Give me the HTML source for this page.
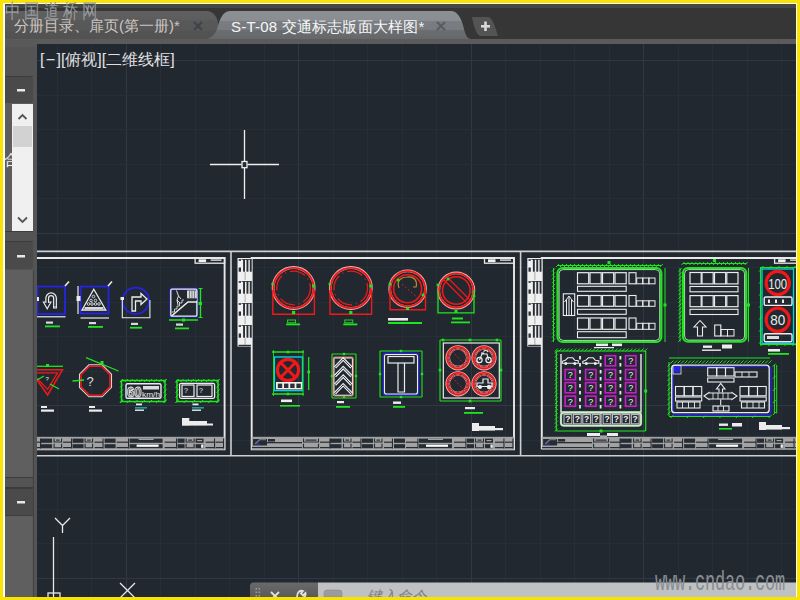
<!DOCTYPE html><html><head><meta charset="utf-8"><style>
*{margin:0;padding:0;box-sizing:border-box}
html,body{width:800px;height:600px;overflow:hidden;background:#f9e300}
body{position:relative;font-family:"Liberation Sans",sans-serif}
.abs{position:absolute}
.t{position:absolute;white-space:nowrap;font-family:"Liberation Sans",sans-serif}
</style></head><body>
<div class="abs" style="left:3px;top:3px;width:794px;height:594px;background:#ffffff"></div>
<svg class="abs" style="left:0;top:0" width="800" height="600" viewBox="0 0 800 600"><defs><clipPath id="cd"><rect x="37" y="44" width="759" height="553"/></clipPath><linearGradient id="gact" x1="0" y1="0" x2="0" y2="1"><stop offset="0" stop-color="#8c8f93"/><stop offset="0.33" stop-color="#8a8d91"/><stop offset="0.33" stop-color="#7a7e82"/><stop offset="0.64" stop-color="#777b7f"/><stop offset="0.64" stop-color="#6b6e72"/><stop offset="1" stop-color="#64676a"/></linearGradient><linearGradient id="gina" x1="0" y1="0" x2="0" y2="1"><stop offset="0" stop-color="#606060"/><stop offset="0.3" stop-color="#5d5d5d"/><stop offset="0.3" stop-color="#595959"/><stop offset="0.7" stop-color="#575757"/><stop offset="0.7" stop-color="#535353"/><stop offset="1" stop-color="#525252"/></linearGradient></defs><rect x="5" y="4" width="791" height="40" fill="#363636"/><rect x="5" y="4" width="791" height="4" fill="#474747"/><path d="M5,11 L206,11 C214,11 218,18 218,25 C218,33 214,39.5 206,39.5 L5,39.5 Z" fill="url(#gina)"/><path d="M230,11 L451,11 C457,11 460,17 462,22 C464,28 465,35 468,38 L473,40 L203,40 C210,39 215,35 217,29 C219,22 222,11 230,11 Z" fill="url(#gact)"/><path d="M472,17 L488,17 C493,17 496,30 498,36 L481,36 C476,36 473,23 472,17 Z" fill="#545454"/><rect x="481" y="25" width="9" height="2.6" fill="#d8d8d8"/><rect x="484.2" y="21.5" width="2.6" height="9.5" fill="#d8d8d8"/><rect x="5" y="39" width="791" height="5" fill="#5b5b5b"/><path d="M194,22 L202,30 M202,22 L194,30" stroke="#3e444b" stroke-width="2.2"/><path d="M437,22 L445,30 M445,22 L437,30" stroke="#5a5d60" stroke-width="2.2"/><rect x="5" y="44" width="32" height="553" fill="#545454"/><rect x="5" y="40" width="32" height="7" fill="#595959"/><path d="M5,47 L30,47 Q33,47 33,50 L33,76 L5,76 Z" fill="#545454"/><rect x="5" y="76" width="28" height="1" fill="#3c3c3c"/><path d="M5,77 L30,77 Q33,77 33,80 L33,100 Q33,103 30,103 L5,103 Z" fill="#4a4a4a"/><rect x="17" y="89" width="8" height="2.5" fill="#e8e8e8"/><rect x="5" y="103" width="28" height="128" fill="#5d5d5d"/><rect x="12" y="104" width="21" height="127" fill="#f0f0f0"/><rect x="13" y="126" width="19" height="21" fill="#d2d2d2"/><path d="M18.5,119 L22.5,115 L26.5,119" stroke="#555" stroke-width="1.8" fill="none"/><path d="M18,217.5 L22.5,222 L27,217.5" stroke="#555" stroke-width="1.8" fill="none"/><rect x="5" y="231" width="28" height="1" fill="#3c3c3c"/><path d="M5,232 L30,232 Q33,232 33,235 L33,238 Q33,241 30,241 L5,241 Z" fill="#545454"/><rect x="5" y="241" width="28" height="1" fill="#3c3c3c"/><path d="M5,242 L30,242 Q33,242 33,245 L33,266 Q33,269 30,269 L5,269 Z" fill="#4a4a4a"/><rect x="17" y="255" width="8" height="2.5" fill="#e8e8e8"/><rect x="5" y="270" width="28" height="207" fill="#5f5f5f"/><rect x="5" y="477" width="28" height="1" fill="#3c3c3c"/><path d="M5,478 L30,478 Q33,478 33,481 L33,484 Q33,487 30,487 L5,487 Z" fill="#545454"/><rect x="5" y="487" width="28" height="2" fill="#3c3c3c"/><path d="M5,489 L30,489 Q33,489 33,492 L33,512 Q33,515 30,515 L5,515 Z" fill="#4a4a4a"/><rect x="17" y="501" width="8" height="2.5" fill="#e8e8e8"/><rect x="5" y="515" width="28" height="1" fill="#3c3c3c"/><rect x="5" y="516" width="28" height="81" fill="#5f5f5f"/><rect x="32.9" y="270" width="0.9" height="327" fill="#3e3e3e"/><g clip-path="url(#cd)"><rect x="37" y="44" width="759" height="553" fill="#212830"/><rect x="57" y="44" width="1" height="553" fill="#272e37"/><rect x="91" y="44" width="1" height="553" fill="#272e37"/><rect x="126" y="44" width="1" height="553" fill="#313844"/><rect x="160" y="44" width="1" height="553" fill="#272e37"/><rect x="195" y="44" width="1" height="553" fill="#272e37"/><rect x="229" y="44" width="1" height="553" fill="#272e37"/><rect x="264" y="44" width="1" height="553" fill="#272e37"/><rect x="298" y="44" width="1" height="553" fill="#313844"/><rect x="333" y="44" width="1" height="553" fill="#272e37"/><rect x="367" y="44" width="1" height="553" fill="#272e37"/><rect x="402" y="44" width="1" height="553" fill="#272e37"/><rect x="436" y="44" width="1" height="553" fill="#272e37"/><rect x="471" y="44" width="1" height="553" fill="#313844"/><rect x="505" y="44" width="1" height="553" fill="#272e37"/><rect x="540" y="44" width="1" height="553" fill="#272e37"/><rect x="574" y="44" width="1" height="553" fill="#272e37"/><rect x="609" y="44" width="1" height="553" fill="#272e37"/><rect x="643" y="44" width="1" height="553" fill="#313844"/><rect x="678" y="44" width="1" height="553" fill="#272e37"/><rect x="712" y="44" width="1" height="553" fill="#272e37"/><rect x="747" y="44" width="1" height="553" fill="#272e37"/><rect x="781" y="44" width="1" height="553" fill="#272e37"/><rect x="37" y="60" width="759" height="1" fill="#313844"/><rect x="37" y="95" width="759" height="1" fill="#272e37"/><rect x="37" y="129" width="759" height="1" fill="#272e37"/><rect x="37" y="164" width="759" height="1" fill="#272e37"/><rect x="37" y="198" width="759" height="1" fill="#272e37"/><rect x="37" y="233" width="759" height="1" fill="#313844"/><rect x="37" y="267" width="759" height="1" fill="#272e37"/><rect x="37" y="302" width="759" height="1" fill="#272e37"/><rect x="37" y="336" width="759" height="1" fill="#272e37"/><rect x="37" y="371" width="759" height="1" fill="#272e37"/><rect x="37" y="405" width="759" height="1" fill="#313844"/><rect x="37" y="440" width="759" height="1" fill="#272e37"/><rect x="37" y="474" width="759" height="1" fill="#272e37"/><rect x="37" y="509" width="759" height="1" fill="#272e37"/><rect x="37" y="543" width="759" height="1" fill="#272e37"/><rect x="37" y="578" width="759" height="1" fill="#313844"/><g fill="none" stroke="#cfcfcf" stroke-width="1.6"><path d="M30,251.4 H800 M30,455.7 H800 M231,251.4 V455.7 M520.6,251.4 V455.7"/></g><g fill="none" stroke="#e8e8e8" stroke-width="1.9"><path d="M20,258 H224.6 V449.2 H20"/><path d="M251.7,258 H514 V449.2 H251.7 Z"/><path d="M541.8,449.2 V258 H810"/></g><rect x="237.5" y="258" width="14.3" height="88.5" fill="#f0f0f0"/><rect x="243.1" y="259.2" width="1.9" height="12.5" fill="#2a2f36"/><rect x="246.5" y="259.2" width="1.9" height="12.5" fill="#2a2f36"/><rect x="249.8" y="259.2" width="1.9" height="12.5" fill="#2a2f36"/><rect x="238.7" y="259.2" width="2.3" height="1.6" fill="#2a2f36"/><rect x="238.7" y="267.5" width="2.3" height="4.2" fill="#2a2f36"/><rect x="241.5" y="259" width="10" height="0.8" fill="#2a2f36"/><rect x="244.7" y="272" width="0.8" height="8" fill="#999"/><rect x="243.1" y="281.2" width="1.9" height="12.5" fill="#2a2f36"/><rect x="246.5" y="281.2" width="1.9" height="12.5" fill="#2a2f36"/><rect x="249.8" y="281.2" width="1.9" height="12.5" fill="#2a2f36"/><rect x="238.7" y="281.2" width="2.3" height="1.6" fill="#2a2f36"/><rect x="238.7" y="289.5" width="2.3" height="4.2" fill="#2a2f36"/><rect x="241.5" y="281" width="10" height="0.8" fill="#2a2f36"/><rect x="244.7" y="294" width="0.8" height="8" fill="#999"/><rect x="243.1" y="303.2" width="1.9" height="12.5" fill="#2a2f36"/><rect x="246.5" y="303.2" width="1.9" height="12.5" fill="#2a2f36"/><rect x="249.8" y="303.2" width="1.9" height="12.5" fill="#2a2f36"/><rect x="238.7" y="303.2" width="2.3" height="1.6" fill="#2a2f36"/><rect x="238.7" y="311.5" width="2.3" height="4.2" fill="#2a2f36"/><rect x="241.5" y="303" width="10" height="0.8" fill="#2a2f36"/><rect x="244.7" y="316" width="0.8" height="8" fill="#999"/><rect x="243.1" y="325.2" width="1.9" height="12.5" fill="#2a2f36"/><rect x="246.5" y="325.2" width="1.9" height="12.5" fill="#2a2f36"/><rect x="249.8" y="325.2" width="1.9" height="12.5" fill="#2a2f36"/><rect x="238.7" y="325.2" width="2.3" height="1.6" fill="#2a2f36"/><rect x="238.7" y="333.5" width="2.3" height="4.2" fill="#2a2f36"/><rect x="241.5" y="325" width="10" height="0.8" fill="#2a2f36"/><rect x="244.7" y="338" width="0.8" height="8" fill="#999"/><rect x="238.5" y="344.8" width="12.5" height="1.2" fill="#2a2f36"/><rect x="527.3" y="258" width="14.3" height="88.5" fill="#f0f0f0"/><rect x="532.9" y="259.2" width="1.9" height="12.5" fill="#2a2f36"/><rect x="536.3" y="259.2" width="1.9" height="12.5" fill="#2a2f36"/><rect x="539.5999999999999" y="259.2" width="1.9" height="12.5" fill="#2a2f36"/><rect x="528.5" y="259.2" width="2.3" height="1.6" fill="#2a2f36"/><rect x="528.5" y="267.5" width="2.3" height="4.2" fill="#2a2f36"/><rect x="531.3" y="259" width="10" height="0.8" fill="#2a2f36"/><rect x="534.5" y="272" width="0.8" height="8" fill="#999"/><rect x="532.9" y="281.2" width="1.9" height="12.5" fill="#2a2f36"/><rect x="536.3" y="281.2" width="1.9" height="12.5" fill="#2a2f36"/><rect x="539.5999999999999" y="281.2" width="1.9" height="12.5" fill="#2a2f36"/><rect x="528.5" y="281.2" width="2.3" height="1.6" fill="#2a2f36"/><rect x="528.5" y="289.5" width="2.3" height="4.2" fill="#2a2f36"/><rect x="531.3" y="281" width="10" height="0.8" fill="#2a2f36"/><rect x="534.5" y="294" width="0.8" height="8" fill="#999"/><rect x="532.9" y="303.2" width="1.9" height="12.5" fill="#2a2f36"/><rect x="536.3" y="303.2" width="1.9" height="12.5" fill="#2a2f36"/><rect x="539.5999999999999" y="303.2" width="1.9" height="12.5" fill="#2a2f36"/><rect x="528.5" y="303.2" width="2.3" height="1.6" fill="#2a2f36"/><rect x="528.5" y="311.5" width="2.3" height="4.2" fill="#2a2f36"/><rect x="531.3" y="303" width="10" height="0.8" fill="#2a2f36"/><rect x="534.5" y="316" width="0.8" height="8" fill="#999"/><rect x="532.9" y="325.2" width="1.9" height="12.5" fill="#2a2f36"/><rect x="536.3" y="325.2" width="1.9" height="12.5" fill="#2a2f36"/><rect x="539.5999999999999" y="325.2" width="1.9" height="12.5" fill="#2a2f36"/><rect x="528.5" y="325.2" width="2.3" height="1.6" fill="#2a2f36"/><rect x="528.5" y="333.5" width="2.3" height="4.2" fill="#2a2f36"/><rect x="531.3" y="325" width="10" height="0.8" fill="#2a2f36"/><rect x="534.5" y="338" width="0.8" height="8" fill="#999"/><rect x="528.3" y="344.8" width="12.5" height="1.2" fill="#2a2f36"/><rect x="195.1" y="258" width="29.5" height="5.2" fill="none" stroke="#e8e8e8" stroke-width="1.3"/><rect x="198.6" y="259.3" width="7.5" height="2.8" fill="#f2f2f2"/><rect x="210.6" y="259.4" width="11" height="1.4" fill="#e0e0e0"/><rect x="484.5" y="258" width="29.5" height="5.2" fill="none" stroke="#e8e8e8" stroke-width="1.3"/><rect x="488" y="259.3" width="7.5" height="2.8" fill="#f2f2f2"/><rect x="500" y="259.4" width="11" height="1.4" fill="#e0e0e0"/><rect x="774.6" y="258" width="29.5" height="5.2" fill="none" stroke="#e8e8e8" stroke-width="1.3"/><rect x="778.1" y="259.3" width="7.5" height="2.8" fill="#f2f2f2"/><rect x="790.1" y="259.4" width="11" height="1.4" fill="#e0e0e0"/><rect x="-37.69999999999999" y="436.8" width="262.3" height="13" fill="#a2a2a2"/><rect x="-36.39999999999998" y="439" width="14.0" height="6.5" fill="#262c34"/><path d="M-34.39999999999998,444 L-29.399999999999977,439.5 H-23.399999999999977" stroke="#707478" stroke-width="1.5" fill="none"/><rect x="-32.89999999999998" y="443.5" width="3" height="1.6" fill="#3030d0"/><rect x="-22.399999999999977" y="442" width="35.0" height="1.3" fill="#262c34"/><rect x="-37.39999999999998" y="447" width="50.0" height="1.1" fill="#262c34"/><rect x="-21.399999999999977" y="439" width="7.0" height="2.6" fill="#262c34"/><path d="M14.100000000000023,438.5 V442 H29.100000000000023 V438.5 M14.100000000000023,443.8 V447.8 H29.100000000000023 V443.8" stroke="#262c34" stroke-width="1.1" fill="none"/><rect x="16.100000000000023" y="439.5" width="11.0" height="1.2" fill="#262c34"/><rect x="30.600000000000023" y="441.6" width="10.0" height="1.2" fill="#262c34"/><rect x="30.600000000000023" y="447" width="10.0" height="1.2" fill="#262c34"/><rect x="40.00000000000002" y="438.5" width="1.1" height="10" fill="#262c34"/><rect x="40.60000000000002" y="438.6" width="11.5" height="4.2" fill="#262c34"/><rect x="40.60000000000002" y="444.2" width="11.5" height="4" fill="#262c34"/><path d="M54.10000000000002,438.5 V442 H61.60000000000002 V438.5 M54.10000000000002,443.8 V447.8 H61.60000000000002 V443.8" stroke="#262c34" stroke-width="1.1" fill="none"/><rect x="56.10000000000002" y="439.5" width="3.5" height="1.2" fill="#262c34"/><rect x="63.10000000000002" y="441.6" width="8.5" height="1.2" fill="#262c34"/><rect x="63.10000000000002" y="447" width="8.5" height="1.2" fill="#262c34"/><rect x="71.00000000000003" y="438.5" width="1.1" height="10" fill="#262c34"/><rect x="72.60000000000002" y="438.6" width="11.0" height="4.2" fill="#262c34"/><rect x="72.60000000000002" y="444.2" width="11.0" height="4" fill="#262c34"/><path d="M85.10000000000002,438.5 V442 H92.60000000000002 V438.5 M85.10000000000002,443.8 V447.8 H92.60000000000002 V443.8" stroke="#262c34" stroke-width="1.1" fill="none"/><rect x="87.10000000000002" y="439.5" width="3.5" height="1.2" fill="#262c34"/><rect x="94.60000000000002" y="441.6" width="8.5" height="1.2" fill="#262c34"/><rect x="94.60000000000002" y="447" width="8.5" height="1.2" fill="#262c34"/><rect x="102.50000000000003" y="438.5" width="1.1" height="10" fill="#262c34"/><rect x="104.60000000000002" y="438.6" width="11.0" height="4.2" fill="#262c34"/><rect x="104.60000000000002" y="444.2" width="11.0" height="4" fill="#262c34"/><rect x="116.60000000000002" y="441.6" width="12.0" height="1.2" fill="#262c34"/><rect x="116.60000000000002" y="447" width="12.0" height="1.2" fill="#262c34"/><rect x="128.00000000000003" y="438.5" width="1.1" height="10" fill="#262c34"/><rect x="129.60000000000002" y="438.6" width="33.0" height="4.2" fill="#262c34"/><rect x="129.60000000000002" y="444.2" width="33.0" height="4" fill="#262c34"/><rect x="138.60000000000002" y="438.6" width="15.0" height="1.4" fill="#a2a2a2"/><rect x="136.60000000000002" y="444.6" width="22.0" height="2.2" fill="#ffffff"/><rect x="164.60000000000002" y="441.6" width="12.0" height="1.2" fill="#262c34"/><rect x="164.60000000000002" y="447" width="12.0" height="1.2" fill="#262c34"/><rect x="176.00000000000003" y="438.5" width="1.1" height="10" fill="#262c34"/><rect x="177.60000000000002" y="438.6" width="7.0" height="4.2" fill="#262c34"/><rect x="177.60000000000002" y="444.2" width="7.0" height="4" fill="#262c34"/><path d="M186.10000000000002,438.5 V442 H194.10000000000002 V438.5 M186.10000000000002,443.8 V447.8 H194.10000000000002 V443.8" stroke="#262c34" stroke-width="1.1" fill="none"/><rect x="188.10000000000002" y="439.5" width="4.0" height="1.2" fill="#262c34"/><rect x="195.60000000000002" y="438.6" width="8.0" height="4.2" fill="#262c34"/><rect x="195.60000000000002" y="444.2" width="8.0" height="4" fill="#262c34"/><rect x="197.10000000000002" y="440" width="5.0" height="1.2" fill="#a2a2a2"/><rect x="201.10000000000002" y="444.5" width="2.3" height="3.3" fill="#f0f0f0"/><rect x="205.60000000000002" y="441.6" width="9.0" height="1.2" fill="#262c34"/><rect x="205.60000000000002" y="447" width="9.0" height="1.2" fill="#262c34"/><rect x="214.00000000000003" y="438.5" width="1.1" height="10" fill="#262c34"/><rect x="215.60000000000002" y="441.6" width="8.0" height="1.2" fill="#262c34"/><rect x="215.60000000000002" y="447" width="8.0" height="1.2" fill="#262c34"/><rect x="223.00000000000003" y="438.5" width="1.1" height="10" fill="#262c34"/><rect x="251.7" y="436.8" width="262.3" height="13" fill="#a2a2a2"/><rect x="253" y="439" width="14" height="6.5" fill="#262c34"/><path d="M255,444 L260,439.5 H266" stroke="#707478" stroke-width="1.5" fill="none"/><rect x="256.5" y="443.5" width="3" height="1.6" fill="#3030d0"/><rect x="267" y="442" width="35" height="1.3" fill="#262c34"/><rect x="252" y="447" width="50" height="1.1" fill="#262c34"/><rect x="268" y="439" width="7.0" height="2.6" fill="#262c34"/><path d="M303.5,438.5 V442 H318.5 V438.5 M303.5,443.8 V447.8 H318.5 V443.8" stroke="#262c34" stroke-width="1.1" fill="none"/><rect x="305.5" y="439.5" width="11" height="1.2" fill="#262c34"/><rect x="320" y="441.6" width="10" height="1.2" fill="#262c34"/><rect x="320" y="447" width="10" height="1.2" fill="#262c34"/><rect x="329.4" y="438.5" width="1.1" height="10" fill="#262c34"/><rect x="330" y="438.6" width="11.5" height="4.2" fill="#262c34"/><rect x="330" y="444.2" width="11.5" height="4" fill="#262c34"/><path d="M343.5,438.5 V442 H351.0 V438.5 M343.5,443.8 V447.8 H351.0 V443.8" stroke="#262c34" stroke-width="1.1" fill="none"/><rect x="345.5" y="439.5" width="3.5" height="1.2" fill="#262c34"/><rect x="352.5" y="441.6" width="8.5" height="1.2" fill="#262c34"/><rect x="352.5" y="447" width="8.5" height="1.2" fill="#262c34"/><rect x="360.4" y="438.5" width="1.1" height="10" fill="#262c34"/><rect x="362" y="438.6" width="11" height="4.2" fill="#262c34"/><rect x="362" y="444.2" width="11" height="4" fill="#262c34"/><path d="M374.5,438.5 V442 H382.0 V438.5 M374.5,443.8 V447.8 H382.0 V443.8" stroke="#262c34" stroke-width="1.1" fill="none"/><rect x="376.5" y="439.5" width="3.5" height="1.2" fill="#262c34"/><rect x="384" y="441.6" width="8.5" height="1.2" fill="#262c34"/><rect x="384" y="447" width="8.5" height="1.2" fill="#262c34"/><rect x="391.9" y="438.5" width="1.1" height="10" fill="#262c34"/><rect x="394" y="438.6" width="11" height="4.2" fill="#262c34"/><rect x="394" y="444.2" width="11" height="4" fill="#262c34"/><rect x="406" y="441.6" width="12" height="1.2" fill="#262c34"/><rect x="406" y="447" width="12" height="1.2" fill="#262c34"/><rect x="417.4" y="438.5" width="1.1" height="10" fill="#262c34"/><rect x="419" y="438.6" width="33" height="4.2" fill="#262c34"/><rect x="419" y="444.2" width="33" height="4" fill="#262c34"/><rect x="428" y="438.6" width="15" height="1.4" fill="#a2a2a2"/><rect x="426" y="444.6" width="22" height="2.2" fill="#ffffff"/><rect x="454" y="441.6" width="12" height="1.2" fill="#262c34"/><rect x="454" y="447" width="12" height="1.2" fill="#262c34"/><rect x="465.4" y="438.5" width="1.1" height="10" fill="#262c34"/><rect x="467" y="438.6" width="7" height="4.2" fill="#262c34"/><rect x="467" y="444.2" width="7" height="4" fill="#262c34"/><path d="M475.5,438.5 V442 H483.5 V438.5 M475.5,443.8 V447.8 H483.5 V443.8" stroke="#262c34" stroke-width="1.1" fill="none"/><rect x="477.5" y="439.5" width="4" height="1.2" fill="#262c34"/><rect x="485" y="438.6" width="8" height="4.2" fill="#262c34"/><rect x="485" y="444.2" width="8" height="4" fill="#262c34"/><rect x="486.5" y="440" width="5" height="1.2" fill="#a2a2a2"/><rect x="490.5" y="444.5" width="2.3" height="3.3" fill="#f0f0f0"/><rect x="495" y="441.6" width="9" height="1.2" fill="#262c34"/><rect x="495" y="447" width="9" height="1.2" fill="#262c34"/><rect x="503.4" y="438.5" width="1.1" height="10" fill="#262c34"/><rect x="505" y="441.6" width="8" height="1.2" fill="#262c34"/><rect x="505" y="447" width="8" height="1.2" fill="#262c34"/><rect x="512.4" y="438.5" width="1.1" height="10" fill="#262c34"/><rect x="541.8" y="436.8" width="262.30000000000007" height="13" fill="#a2a2a2"/><rect x="543.1" y="439" width="14.0" height="6.5" fill="#262c34"/><path d="M545.1,444 L550.1,439.5 H556.1" stroke="#707478" stroke-width="1.5" fill="none"/><rect x="546.6" y="443.5" width="3" height="1.6" fill="#3030d0"/><rect x="557.1" y="442" width="35.0" height="1.3" fill="#262c34"/><rect x="542.1" y="447" width="50.0" height="1.1" fill="#262c34"/><rect x="558.1" y="439" width="7.0" height="2.6" fill="#262c34"/><path d="M593.6,438.5 V442 H608.6 V438.5 M593.6,443.8 V447.8 H608.6 V443.8" stroke="#262c34" stroke-width="1.1" fill="none"/><rect x="595.6" y="439.5" width="11.0" height="1.2" fill="#262c34"/><rect x="610.1" y="441.6" width="10.0" height="1.2" fill="#262c34"/><rect x="610.1" y="447" width="10.0" height="1.2" fill="#262c34"/><rect x="619.5" y="438.5" width="1.1" height="10" fill="#262c34"/><rect x="620.1" y="438.6" width="11.5" height="4.2" fill="#262c34"/><rect x="620.1" y="444.2" width="11.5" height="4" fill="#262c34"/><path d="M633.6,438.5 V442 H641.1 V438.5 M633.6,443.8 V447.8 H641.1 V443.8" stroke="#262c34" stroke-width="1.1" fill="none"/><rect x="635.6" y="439.5" width="3.5" height="1.2" fill="#262c34"/><rect x="642.6" y="441.6" width="8.5" height="1.2" fill="#262c34"/><rect x="642.6" y="447" width="8.5" height="1.2" fill="#262c34"/><rect x="650.5" y="438.5" width="1.1" height="10" fill="#262c34"/><rect x="652.1" y="438.6" width="11.0" height="4.2" fill="#262c34"/><rect x="652.1" y="444.2" width="11.0" height="4" fill="#262c34"/><path d="M664.6,438.5 V442 H672.1 V438.5 M664.6,443.8 V447.8 H672.1 V443.8" stroke="#262c34" stroke-width="1.1" fill="none"/><rect x="666.6" y="439.5" width="3.5" height="1.2" fill="#262c34"/><rect x="674.1" y="441.6" width="8.5" height="1.2" fill="#262c34"/><rect x="674.1" y="447" width="8.5" height="1.2" fill="#262c34"/><rect x="682.0" y="438.5" width="1.1" height="10" fill="#262c34"/><rect x="684.1" y="438.6" width="11.0" height="4.2" fill="#262c34"/><rect x="684.1" y="444.2" width="11.0" height="4" fill="#262c34"/><rect x="696.1" y="441.6" width="12.0" height="1.2" fill="#262c34"/><rect x="696.1" y="447" width="12.0" height="1.2" fill="#262c34"/><rect x="707.5" y="438.5" width="1.1" height="10" fill="#262c34"/><rect x="709.1" y="438.6" width="33.0" height="4.2" fill="#262c34"/><rect x="709.1" y="444.2" width="33.0" height="4" fill="#262c34"/><rect x="718.1" y="438.6" width="15.0" height="1.4" fill="#a2a2a2"/><rect x="716.1" y="444.6" width="22.0" height="2.2" fill="#ffffff"/><rect x="744.1" y="441.6" width="12.0" height="1.2" fill="#262c34"/><rect x="744.1" y="447" width="12.0" height="1.2" fill="#262c34"/><rect x="755.5" y="438.5" width="1.1" height="10" fill="#262c34"/><rect x="757.1" y="438.6" width="7.0" height="4.2" fill="#262c34"/><rect x="757.1" y="444.2" width="7.0" height="4" fill="#262c34"/><path d="M765.6,438.5 V442 H773.6 V438.5 M765.6,443.8 V447.8 H773.6 V443.8" stroke="#262c34" stroke-width="1.1" fill="none"/><rect x="767.6" y="439.5" width="4.0" height="1.2" fill="#262c34"/><rect x="775.1" y="438.6" width="8.0" height="4.2" fill="#262c34"/><rect x="775.1" y="444.2" width="8.0" height="4" fill="#262c34"/><rect x="776.6" y="440" width="5.0" height="1.2" fill="#a2a2a2"/><rect x="780.6" y="444.5" width="2.3" height="3.3" fill="#f0f0f0"/><rect x="785.1" y="441.6" width="9.0" height="1.2" fill="#262c34"/><rect x="785.1" y="447" width="9.0" height="1.2" fill="#262c34"/><rect x="793.5" y="438.5" width="1.1" height="10" fill="#262c34"/><rect x="795.1" y="441.6" width="8.0" height="1.2" fill="#262c34"/><rect x="795.1" y="447" width="8.0" height="1.2" fill="#262c34"/><rect x="802.5" y="438.5" width="1.1" height="10" fill="#262c34"/><rect x="37.5" y="286.5" width="27.5" height="27.5" fill="none" stroke="#2424e6" stroke-width="1.8"/><path d="M47.2,303 V298.2 A3.9,3.9 0 0 1 55,298.2 V308.6" fill="none" stroke="#ececec" stroke-width="3.9"/><path d="M47.2,303 V298.2 A3.9,3.9 0 0 1 55,298.2 V308.6" fill="none" stroke="#212830" stroke-width="1.5"/><path d="M55,308.6 V306" stroke="#ececec" stroke-width="1" /><path d="M45.3,302 H43.4 L47.2,308.8 L51,302 H49.1" fill="none" stroke="#ececec" stroke-width="1.1"/><path d="M46.6,302.5 H47.8 L47.2,305 Z" fill="#212830"/><path d="M37,316.8 L65.5,316.8" stroke="#ececec" stroke-width="1.2" fill="none"/><path d="M65,286 L69,281.5" stroke="#ececec" stroke-width="1.6"/><rect x="36.5" y="297" width="2.5" height="4" fill="#ececec"/><rect x="46" y="321.5" width="7" height="2.2" fill="#ececec" opacity="0.9"/><rect x="45" y="325.5" width="15" height="1.8" fill="#1ee61e"/><rect x="80.5" y="286.5" width="28" height="27" fill="none" stroke="#2424e6" stroke-width="1.8"/><path d="M93.8,289.2 L105.8,310 L82,310 Z" fill="none" stroke="#ececec" stroke-width="1.3"/><rect x="84.5" y="307" width="19" height="2.2" fill="#d8d8d8"/><circle cx="93.5" cy="296.5" r="1.3" fill="none" stroke="#e0e0e0" stroke-width="0.9"/><circle cx="91" cy="300.5" r="1.3" fill="none" stroke="#e0e0e0" stroke-width="0.9"/><circle cx="95.5" cy="300.5" r="1.3" fill="none" stroke="#e0e0e0" stroke-width="0.9"/><circle cx="88.5" cy="304" r="1.3" fill="none" stroke="#e0e0e0" stroke-width="0.9"/><circle cx="92" cy="304" r="1.3" fill="none" stroke="#e0e0e0" stroke-width="0.9"/><circle cx="95.5" cy="304" r="1.3" fill="none" stroke="#e0e0e0" stroke-width="0.9"/><circle cx="99" cy="304" r="1.3" fill="none" stroke="#e0e0e0" stroke-width="0.9"/><path d="M78,286 L78,314" stroke="#ececec" stroke-width="1.2" fill="none"/><path d="M80.5,318 L109,318" stroke="#ececec" stroke-width="1.2" fill="none"/><rect x="76.5" y="296" width="4" height="5" fill="#ececec"/><path d="M108,286 L112,281.5" stroke="#ececec" stroke-width="1.6"/><rect x="89" y="322" width="7" height="2.2" fill="#ececec" opacity="0.9"/><rect x="88" y="326" width="15" height="1.8" fill="#1ee61e"/><circle cx="135.8" cy="300.8" r="13.2" fill="none" stroke="#2424e6" stroke-width="1.7"/><path d="M122.3,297.5 V317.7 H149.9 V300" fill="none" stroke="#ececec" stroke-width="1.1"/><rect x="120.5" y="297" width="3.5" height="3" fill="#ececec"/><path d="M132,311 V297 H141 V293.5 L147,299 L141,304.5 V301 H135.5 V311 Z" fill="none" stroke="#ececec" stroke-width="1.3"/><rect x="131" y="322.8" width="7" height="2.2" fill="#ececec" opacity="0.9"/><rect x="130" y="326.8" width="12" height="1.8" fill="#1ee61e"/><rect x="170" y="288.4" width="27.7" height="28.6" rx="1.5" fill="none" stroke="#2424e6" stroke-width="1.1"/><rect x="170.8" y="289.2" width="26.1" height="27" rx="1.3" fill="none" stroke="#ececec" stroke-width="1.3"/><path d="M171.5,316 L188,302 H197" fill="none" stroke="#ececec" stroke-width="1.6"/><rect x="187" y="290.5" width="9.5" height="8" fill="#d6d6d6"/><path d="M189.5,291 V298 M192,291 V298 M194.5,291 V298" stroke="#555a60" stroke-width="0.7"/><rect x="187" y="298.5" width="10" height="2" fill="#2a3038"/><path d="M171.5,312 H174.5 V309 H177 V306 H179.5 V303 H182 V300 H184" fill="none" stroke="#d8d8d8" stroke-width="0.9"/><path d="M176.5,290.5 L178.5,296 L177,300 L178,305 M178.5,296 L181,299 M177,300 L180,303" fill="none" stroke="#e0e0e0" stroke-width="1"/><path d="M200.5,288.4 V318 M169,320 H198" stroke="#1ee61e" stroke-width="1.4" fill="none"/><path d="M198.5,288.5 H202.5 M198.5,317.5 H202.5" stroke="#1ee61e" stroke-width="1" fill="none"/><rect x="198.5" y="302" width="3.5" height="3" fill="#1ee61e"/><rect x="182" y="318.5" width="3" height="3" fill="#1ee61e"/><rect x="176" y="323.5" width="7" height="2.2" fill="#ececec" opacity="0.9"/><rect x="175" y="327.5" width="14" height="1.8" fill="#1ee61e"/><path d="M30,369.8 L62.4,369.8 L47.6,394.9 Z" fill="none" stroke="#f01818" stroke-width="1.6"/><path d="M32,372.8 L57.5,372.8 L47.6,389.5 Z" fill="none" stroke="#f01818" stroke-width="1.3"/><path d="M37,366.3 L63,366.3" stroke="#1ee61e" stroke-width="1.3" fill="none"/><rect x="46" y="364" width="3" height="3" fill="#1ee61e"/><path d="M37,380 L44,376" stroke="#1ee61e" stroke-width="1.3" fill="none"/><path d="M50,384 L59,389" stroke="#1ee61e" stroke-width="1.3" fill="none"/><text x="45.5" y="381" font-size="6" fill="#ececec" font-family="Liberation Sans">?</text><rect x="41" y="406" width="6" height="2" fill="#ececec"/><rect x="41" y="409.5" width="13" height="2.2" fill="#ececec"/><polygon points="111.5,387.4 102.1,396.8 88.9,396.8 79.5,387.4 79.5,374.2 88.9,364.8 102.1,364.8 111.5,374.2" fill="none" stroke="#d8d8d8" stroke-width="1.1"/><polygon points="110.0,386.8 101.5,395.3 89.5,395.3 81.0,386.8 81.0,374.8 89.5,366.3 101.5,366.3 110.0,374.8" fill="none" stroke="#f01818" stroke-width="1.6"/><text x="86.5" y="386" font-size="13" fill="#dcdcdc" font-family="Liberation Sans">?</text><path d="M86,357.6 L118.5,371" stroke="#1ee61e" stroke-width="1.2" fill="none"/><path d="M72.5,381 L84,380" stroke="#1ee61e" stroke-width="1.4" fill="none"/><rect x="100.5" y="361" width="3" height="3" fill="#1ee61e"/><rect x="89" y="406" width="6" height="2" fill="#ececec"/><rect x="89" y="409.5" width="13" height="2.2" fill="#ececec"/><rect x="121.5" y="380.5" width="43.5" height="21" fill="none" stroke="#1ee61e" stroke-width="1.5"/><path d="M120.0,382.0 L123.0,379.0" stroke="#1ee61e" stroke-width="1"/><path d="M124.8,382.0 L127.8,379.0" stroke="#1ee61e" stroke-width="1"/><path d="M129.7,382.0 L132.7,379.0" stroke="#1ee61e" stroke-width="1"/><path d="M134.5,382.0 L137.5,379.0" stroke="#1ee61e" stroke-width="1"/><path d="M139.3,382.0 L142.3,379.0" stroke="#1ee61e" stroke-width="1"/><path d="M144.2,382.0 L147.2,379.0" stroke="#1ee61e" stroke-width="1"/><path d="M149.0,382.0 L152.0,379.0" stroke="#1ee61e" stroke-width="1"/><path d="M153.8,382.0 L156.8,379.0" stroke="#1ee61e" stroke-width="1"/><path d="M158.7,382.0 L161.7,379.0" stroke="#1ee61e" stroke-width="1"/><path d="M163.5,382.0 L166.5,379.0" stroke="#1ee61e" stroke-width="1"/><path d="M120.0,403.0 L123.0,400.0" stroke="#1ee61e" stroke-width="1"/><path d="M127.2,403.0 L130.2,400.0" stroke="#1ee61e" stroke-width="1"/><path d="M134.5,403.0 L137.5,400.0" stroke="#1ee61e" stroke-width="1"/><path d="M141.8,403.0 L144.8,400.0" stroke="#1ee61e" stroke-width="1"/><path d="M149.0,403.0 L152.0,400.0" stroke="#1ee61e" stroke-width="1"/><path d="M156.2,403.0 L159.2,400.0" stroke="#1ee61e" stroke-width="1"/><path d="M163.5,403.0 L166.5,400.0" stroke="#1ee61e" stroke-width="1"/><path d="M120.0,382.5 L123.0,379.5" stroke="#1ee61e" stroke-width="1"/><path d="M120.0,387.5 L123.0,384.5" stroke="#1ee61e" stroke-width="1"/><path d="M120.0,392.5 L123.0,389.5" stroke="#1ee61e" stroke-width="1"/><path d="M120.0,397.5 L123.0,394.5" stroke="#1ee61e" stroke-width="1"/><path d="M120.0,402.5 L123.0,399.5" stroke="#1ee61e" stroke-width="1"/><path d="M163.5,382.5 L166.5,379.5" stroke="#1ee61e" stroke-width="1"/><path d="M163.5,387.5 L166.5,384.5" stroke="#1ee61e" stroke-width="1"/><path d="M163.5,392.5 L166.5,389.5" stroke="#1ee61e" stroke-width="1"/><path d="M163.5,397.5 L166.5,394.5" stroke="#1ee61e" stroke-width="1"/><path d="M163.5,402.5 L166.5,399.5" stroke="#1ee61e" stroke-width="1"/><rect x="126" y="383.8" width="35" height="14.4" rx="1.5" fill="none" stroke="#ececec" stroke-width="1.4"/><text x="127" y="397" font-size="14" font-weight="bold" fill="none" stroke="#ececec" stroke-width="0.9" font-family="Liberation Sans" textLength="14.5" lengthAdjust="spacingAndGlyphs">60</text><text x="142" y="397" font-size="7" fill="#ececec" font-family="Liberation Sans" textLength="18" lengthAdjust="spacingAndGlyphs">km/h</text><rect x="143" y="386" width="16" height="3.5" fill="#ddd"/><rect x="136" y="403.5" width="6" height="1.8" fill="#ececec"/><rect x="135" y="407" width="12" height="1.6" fill="#18a0a0"/><rect x="135" y="409.5" width="9" height="1.4" fill="#ececec"/><rect x="177" y="380.5" width="41" height="21" fill="none" stroke="#1ee61e" stroke-width="1.5"/><path d="M175.5,382.0 L178.5,379.0" stroke="#1ee61e" stroke-width="1"/><path d="M180.6,382.0 L183.6,379.0" stroke="#1ee61e" stroke-width="1"/><path d="M185.8,382.0 L188.8,379.0" stroke="#1ee61e" stroke-width="1"/><path d="M190.9,382.0 L193.9,379.0" stroke="#1ee61e" stroke-width="1"/><path d="M196.0,382.0 L199.0,379.0" stroke="#1ee61e" stroke-width="1"/><path d="M201.1,382.0 L204.1,379.0" stroke="#1ee61e" stroke-width="1"/><path d="M206.2,382.0 L209.2,379.0" stroke="#1ee61e" stroke-width="1"/><path d="M211.4,382.0 L214.4,379.0" stroke="#1ee61e" stroke-width="1"/><path d="M216.5,382.0 L219.5,379.0" stroke="#1ee61e" stroke-width="1"/><path d="M175.5,403.0 L178.5,400.0" stroke="#1ee61e" stroke-width="1"/><path d="M183.7,403.0 L186.7,400.0" stroke="#1ee61e" stroke-width="1"/><path d="M191.9,403.0 L194.9,400.0" stroke="#1ee61e" stroke-width="1"/><path d="M200.1,403.0 L203.1,400.0" stroke="#1ee61e" stroke-width="1"/><path d="M208.3,403.0 L211.3,400.0" stroke="#1ee61e" stroke-width="1"/><path d="M216.5,403.0 L219.5,400.0" stroke="#1ee61e" stroke-width="1"/><path d="M175.5,382.5 L178.5,379.5" stroke="#1ee61e" stroke-width="1"/><path d="M175.5,387.5 L178.5,384.5" stroke="#1ee61e" stroke-width="1"/><path d="M175.5,392.5 L178.5,389.5" stroke="#1ee61e" stroke-width="1"/><path d="M175.5,397.5 L178.5,394.5" stroke="#1ee61e" stroke-width="1"/><path d="M175.5,402.5 L178.5,399.5" stroke="#1ee61e" stroke-width="1"/><path d="M216.5,382.5 L219.5,379.5" stroke="#1ee61e" stroke-width="1"/><path d="M216.5,387.5 L219.5,384.5" stroke="#1ee61e" stroke-width="1"/><path d="M216.5,392.5 L219.5,389.5" stroke="#1ee61e" stroke-width="1"/><path d="M216.5,397.5 L219.5,394.5" stroke="#1ee61e" stroke-width="1"/><path d="M216.5,402.5 L219.5,399.5" stroke="#1ee61e" stroke-width="1"/><rect x="179.6" y="383.3" width="35" height="15" rx="1.5" fill="none" stroke="#ececec" stroke-width="1.3"/><rect x="182" y="385" width="12" height="11.5" fill="none" stroke="#ececec" stroke-width="1.2"/><rect x="197" y="385" width="15" height="11.5" fill="none" stroke="#ececec" stroke-width="1.2"/><text x="184" y="393" font-size="7" fill="#ececec" font-family="Liberation Sans">?</text><text x="199" y="393" font-size="7" fill="#ececec" font-family="Liberation Sans">?</text><rect x="192.5" y="403.5" width="6" height="1.8" fill="#ececec"/><rect x="192" y="407" width="12" height="1.6" fill="#18a0a0"/><rect x="192" y="409.5" width="9" height="1.4" fill="#ececec"/><rect x="182" y="418" width="7.3" height="7.7" fill="#ececec"/><rect x="189" y="421" width="18" height="4.6" fill="#ececec"/><rect x="207" y="423.5" width="6" height="2" fill="#ececec"/><circle cx="293.6" cy="288" r="20.5" fill="none" stroke="#e8b4b4" stroke-width="2.8"/><circle cx="293.6" cy="288" r="20.1" fill="none" stroke="#f01818" stroke-width="1.9"/><circle cx="293.6" cy="288" r="16.8" fill="none" stroke="#f01818" stroke-width="1.3" stroke-dasharray="16 4 1 4"/><path d="M272.8,290 V314.3 H314.40000000000003 V290" fill="none" stroke="#f01818" stroke-width="1.4"/><rect x="271.40000000000003" y="282.8" width="2.4" height="2.4" fill="#1ee61e"/><rect x="312.1" y="284.5" width="3" height="3" fill="#1ee61e"/><rect x="292.0" y="310.9" width="3.2" height="3.2" fill="#1ee61e"/><rect x="287.6" y="320" width="8" height="2.8" fill="none" stroke="#1ee61e" stroke-width="0.9"/><rect x="286.1" y="323.5" width="14" height="1.8" fill="#1ee61e"/><circle cx="350.8" cy="288" r="20.5" fill="none" stroke="#e8b4b4" stroke-width="2.8"/><circle cx="350.8" cy="288" r="20.1" fill="none" stroke="#f01818" stroke-width="1.9"/><circle cx="350.8" cy="288" r="16.8" fill="none" stroke="#f01818" stroke-width="1.3" stroke-dasharray="16 4 1 4"/><path d="M330.0,290 V314.3 H371.6 V290" fill="none" stroke="#f01818" stroke-width="1.4"/><rect x="328.6" y="282.8" width="2.4" height="2.4" fill="#1ee61e"/><rect x="369.3" y="284.5" width="3" height="3" fill="#1ee61e"/><rect x="349.2" y="310.9" width="3.2" height="3.2" fill="#1ee61e"/><rect x="344.8" y="320" width="8" height="2.8" fill="none" stroke="#1ee61e" stroke-width="0.9"/><rect x="343.3" y="323.5" width="14" height="1.8" fill="#1ee61e"/><circle cx="407.6" cy="288.7" r="17.9" fill="none" stroke="#e8b4b4" stroke-width="2.7"/><circle cx="407.6" cy="288.7" r="17.5" fill="none" stroke="#f01818" stroke-width="1.8"/><circle cx="407.6" cy="288.7" r="14" fill="none" stroke="#f01818" stroke-width="1.6"/><path d="M399,288 C396,280 402,277 407,277 C413,276 418,280 416,287 L413,287" fill="none" stroke="#c08a30" stroke-width="1.2"/><path d="M402,284 L418,298" stroke="#f01818" stroke-width="0.9" stroke-dasharray="2 2"/><path d="M390,290 V309.7 H425.5 V290" fill="none" stroke="#f01818" stroke-width="1.4"/><rect x="388.7" y="282.7" width="2.6" height="2.6" fill="#1ee61e"/><rect x="396.7" y="278.7" width="2.6" height="2.6" fill="#1ee61e"/><rect x="406.0" y="307.0" width="3" height="3" fill="#1ee61e"/><rect x="421.7" y="293.7" width="2.6" height="2.6" fill="#1ee61e"/><rect x="388" y="318" width="20" height="2.6" fill="#ececec"/><rect x="388" y="322" width="34" height="2" fill="#1ee61e"/><circle cx="456.3" cy="290.5" r="17.599999999999998" fill="none" stroke="#e8b4b4" stroke-width="2.7"/><circle cx="456.3" cy="290.5" r="17.2" fill="none" stroke="#f01818" stroke-width="1.8"/><circle cx="456.3" cy="290.5" r="13.8" fill="none" stroke="#f01818" stroke-width="1.6"/><path d="M444,280 L466,302 M447.5,277.5 L469,299" stroke="#f01818" stroke-width="1.3"/><path d="M438,290 V312.8 H474 V290" fill="none" stroke="#1ee61e" stroke-width="1.3"/><rect x="436.7" y="283.7" width="2.6" height="2.6" fill="#1ee61e"/><rect x="472.7" y="294.7" width="2.6" height="2.6" fill="#1ee61e"/><rect x="454.5" y="310.0" width="3" height="3" fill="#1ee61e"/><rect x="446.7" y="277.7" width="2.6" height="2.6" fill="#1ee61e"/><rect x="452" y="317.5" width="11" height="2" fill="#1ee61e"/><rect x="451" y="321.5" width="19" height="1.8" fill="#1ee61e"/><rect x="274.4" y="357" width="28.1" height="33.6" fill="none" stroke="#00d8dc" stroke-width="1.4"/><path d="M272,352 H304 M272,394 H304 M308.7,357 V390" stroke="#1ee61e" stroke-width="1.3" fill="none"/><path d="M273.5,350 V396 M303,350 V396" stroke="#1ee61e" stroke-width="0.9" fill="none"/><rect x="286.7" y="350.7" width="2.6" height="2.6" fill="#1ee61e"/><rect x="286.7" y="392.7" width="2.6" height="2.6" fill="#1ee61e"/><rect x="307.4" y="370.7" width="2.6" height="2.6" fill="#1ee61e"/><circle cx="288" cy="370" r="10.6" fill="none" stroke="#f01818" stroke-width="3.2"/><path d="M281,363 L295,377 M295,363 L281,377" stroke="#f01818" stroke-width="3"/><rect x="276" y="382" width="26" height="7.4" fill="#f0f0f0"/><rect x="277.8" y="383.6" width="4.4" height="4.4" fill="#2b3038"/><rect x="284.0" y="383.6" width="4.4" height="4.4" fill="#2b3038"/><rect x="290.2" y="383.6" width="4.4" height="4.4" fill="#2b3038"/><rect x="296.40000000000003" y="383.6" width="4.4" height="4.4" fill="#2b3038"/><rect x="281" y="399.5" width="11" height="2.6" fill="#ececec"/><rect x="280" y="405" width="20" height="1.6" fill="#1ee61e"/><path d="M332,354 H356 M332,398 H356 M332,354 V398 M356,354 V398" stroke="#1ee61e" stroke-width="1.1" fill="none"/><rect x="342.8" y="352.8" width="2.4" height="2.4" fill="#1ee61e"/><rect x="330.8" y="374.8" width="2.4" height="2.4" fill="#1ee61e"/><rect x="354.8" y="374.8" width="2.4" height="2.4" fill="#1ee61e"/><rect x="342.8" y="395.8" width="2.4" height="2.4" fill="#1ee61e"/><rect x="333.2" y="357.2" width="20" height="38.8" rx="1.5" fill="none" stroke="#e07060" stroke-width="1.2"/><rect x="334" y="358" width="18.4" height="37.2" rx="1" fill="none" stroke="#ececec" stroke-width="1"/><path d="M335,367.5 L343.2,359.0 L351.5,367.5" fill="none" stroke="#ececec" stroke-width="3"/><path d="M335,367.5 L343.2,359.0 L351.5,367.5" fill="none" stroke="#2a3038" stroke-width="1"/><path d="M335,376.1 L343.2,367.6 L351.5,376.1" fill="none" stroke="#ececec" stroke-width="3"/><path d="M335,376.1 L343.2,367.6 L351.5,376.1" fill="none" stroke="#2a3038" stroke-width="1"/><path d="M335,384.7 L343.2,376.2 L351.5,384.7" fill="none" stroke="#ececec" stroke-width="3"/><path d="M335,384.7 L343.2,376.2 L351.5,384.7" fill="none" stroke="#2a3038" stroke-width="1"/><path d="M335,393.3 L343.2,384.8 L351.5,393.3" fill="none" stroke="#ececec" stroke-width="3"/><path d="M335,393.3 L343.2,384.8 L351.5,393.3" fill="none" stroke="#2a3038" stroke-width="1"/><rect x="337" y="401" width="7" height="2.2" fill="#ececec"/><rect x="336" y="406" width="14" height="1.8" fill="#1ee61e"/><path d="M380,351 H422 M380,397 H422 M380,351 V397 M422,351 V397" stroke="#1ee61e" stroke-width="1.1" fill="none"/><rect x="399.8" y="349.8" width="2.4" height="2.4" fill="#1ee61e"/><rect x="378.8" y="372.8" width="2.4" height="2.4" fill="#1ee61e"/><rect x="420.8" y="372.8" width="2.4" height="2.4" fill="#1ee61e"/><rect x="399.8" y="395.8" width="2.4" height="2.4" fill="#1ee61e"/><rect x="383.5" y="353.5" width="35" height="41.5" rx="2.5" fill="none" stroke="#2424e6" stroke-width="1.5"/><rect x="384.5" y="354.5" width="33" height="39.5" rx="2" fill="none" stroke="#ececec" stroke-width="1.1"/><rect x="388" y="356.5" width="26" height="6.5" fill="none" stroke="#ececec" stroke-width="1.2"/><path d="M398,363 V392 H404.5 V363" fill="none" stroke="#ececec" stroke-width="1.2"/><rect x="393" y="401.5" width="8" height="2.4" fill="#ececec"/><rect x="393" y="406" width="12" height="1.8" fill="#1ee61e"/><path d="M440,340 H501 M440,401 H501 M440,340 V401 M501,340 V401" stroke="#1ee61e" stroke-width="1.1" fill="none"/><rect x="441.7" y="338.7" width="2.6" height="2.6" fill="#1ee61e"/><rect x="468.7" y="338.7" width="2.6" height="2.6" fill="#1ee61e"/><rect x="495.7" y="338.7" width="2.6" height="2.6" fill="#1ee61e"/><rect x="438.7" y="368.7" width="2.6" height="2.6" fill="#1ee61e"/><rect x="499.7" y="368.7" width="2.6" height="2.6" fill="#1ee61e"/><rect x="468.7" y="399.7" width="2.6" height="2.6" fill="#1ee61e"/><rect x="443.3" y="343" width="56" height="55" fill="none" stroke="#ececec" stroke-width="1.2"/><circle cx="458" cy="357.8" r="11.4" fill="none" stroke="#e8b4b4" stroke-width="2.4"/><circle cx="458" cy="357.8" r="11" fill="none" stroke="#f01818" stroke-width="1.5"/><circle cx="458" cy="357.8" r="8.8" fill="none" stroke="#e8b4b4" stroke-width="1.6"/><circle cx="458" cy="357.8" r="8.8" fill="none" stroke="#f01818" stroke-width="1.0"/><circle cx="484" cy="357.8" r="11.4" fill="none" stroke="#e8b4b4" stroke-width="2.4"/><circle cx="484" cy="357.8" r="11" fill="none" stroke="#f01818" stroke-width="1.5"/><circle cx="484" cy="357.8" r="8.8" fill="none" stroke="#e8b4b4" stroke-width="1.6"/><circle cx="484" cy="357.8" r="8.8" fill="none" stroke="#f01818" stroke-width="1.0"/><circle cx="458" cy="383.8" r="11.4" fill="none" stroke="#e8b4b4" stroke-width="2.4"/><circle cx="458" cy="383.8" r="11" fill="none" stroke="#f01818" stroke-width="1.5"/><circle cx="458" cy="383.8" r="8.8" fill="none" stroke="#e8b4b4" stroke-width="1.6"/><circle cx="458" cy="383.8" r="8.8" fill="none" stroke="#f01818" stroke-width="1.0"/><circle cx="484" cy="383.8" r="11.4" fill="none" stroke="#e8b4b4" stroke-width="2.4"/><circle cx="484" cy="383.8" r="11" fill="none" stroke="#f01818" stroke-width="1.5"/><circle cx="484" cy="383.8" r="8.8" fill="none" stroke="#e8b4b4" stroke-width="1.6"/><circle cx="484" cy="383.8" r="8.8" fill="none" stroke="#f01818" stroke-width="1.0"/><path d="M452,351 L464,364 M452,377 L464,390" stroke="#f01818" stroke-width="0.9" stroke-dasharray="2 2"/><circle cx="479.5" cy="360" r="2.6" fill="none" stroke="#ececec" stroke-width="1.2"/><circle cx="488.5" cy="360" r="2.6" fill="none" stroke="#ececec" stroke-width="1.2"/><path d="M479.5,360 L482,354 H487 L488.5,360 M481,353 H484 M483.5,351.5 C485,350 487,350 488,352" fill="none" stroke="#ececec" stroke-width="1.1"/><path d="M477,386.5 V383 H483 V379 H488 V383 H492 V386.5 Z" fill="none" stroke="#ececec" stroke-width="1.2"/><circle cx="480" cy="387" r="2" fill="#ececec"/><circle cx="489" cy="387" r="2.2" fill="#ececec"/><rect x="465" y="407" width="10" height="2.2" fill="#ececec"/><rect x="464" y="412" width="19" height="1.8" fill="#1ee61e"/><rect x="472" y="423" width="7" height="8" fill="#ececec"/><rect x="479" y="426" width="16" height="4.6" fill="#ececec"/><rect x="495" y="428" width="8" height="2.2" fill="#ececec"/><rect x="557.5" y="268" width="103.79999999999995" height="74" rx="5" fill="none" stroke="#1ee61e" stroke-width="2.2"/><rect x="559.1" y="269.6" width="100.59999999999995" height="70.8" rx="4" fill="none" stroke="#b8f0b8" stroke-width="0.9"/><path d="M557.5,265.5 H661.3 M665,268 V342 M553.5,268 V342" stroke="#1ee61e" stroke-width="1" fill="none"/><path d="M556.0,267.0 L559.0,264.0" stroke="#1ee61e" stroke-width="1"/><path d="M560.0,267.0 L563.0,264.0" stroke="#1ee61e" stroke-width="1"/><path d="M564.0,267.0 L567.0,264.0" stroke="#1ee61e" stroke-width="1"/><path d="M568.0,267.0 L571.0,264.0" stroke="#1ee61e" stroke-width="1"/><path d="M572.0,267.0 L575.0,264.0" stroke="#1ee61e" stroke-width="1"/><path d="M576.0,267.0 L579.0,264.0" stroke="#1ee61e" stroke-width="1"/><path d="M580.0,267.0 L583.0,264.0" stroke="#1ee61e" stroke-width="1"/><path d="M583.9,267.0 L586.9,264.0" stroke="#1ee61e" stroke-width="1"/><path d="M587.9,267.0 L590.9,264.0" stroke="#1ee61e" stroke-width="1"/><path d="M591.9,267.0 L594.9,264.0" stroke="#1ee61e" stroke-width="1"/><path d="M595.9,267.0 L598.9,264.0" stroke="#1ee61e" stroke-width="1"/><path d="M599.9,267.0 L602.9,264.0" stroke="#1ee61e" stroke-width="1"/><path d="M603.9,267.0 L606.9,264.0" stroke="#1ee61e" stroke-width="1"/><path d="M607.9,267.0 L610.9,264.0" stroke="#1ee61e" stroke-width="1"/><path d="M611.9,267.0 L614.9,264.0" stroke="#1ee61e" stroke-width="1"/><path d="M615.9,267.0 L618.9,264.0" stroke="#1ee61e" stroke-width="1"/><path d="M619.9,267.0 L622.9,264.0" stroke="#1ee61e" stroke-width="1"/><path d="M623.9,267.0 L626.9,264.0" stroke="#1ee61e" stroke-width="1"/><path d="M627.9,267.0 L630.9,264.0" stroke="#1ee61e" stroke-width="1"/><path d="M631.9,267.0 L634.9,264.0" stroke="#1ee61e" stroke-width="1"/><path d="M635.8,267.0 L638.8,264.0" stroke="#1ee61e" stroke-width="1"/><path d="M639.8,267.0 L642.8,264.0" stroke="#1ee61e" stroke-width="1"/><path d="M643.8,267.0 L646.8,264.0" stroke="#1ee61e" stroke-width="1"/><path d="M647.8,267.0 L650.8,264.0" stroke="#1ee61e" stroke-width="1"/><path d="M651.8,267.0 L654.8,264.0" stroke="#1ee61e" stroke-width="1"/><path d="M655.8,267.0 L658.8,264.0" stroke="#1ee61e" stroke-width="1"/><path d="M659.8,267.0 L662.8,264.0" stroke="#1ee61e" stroke-width="1"/><path d="M552.0,271.5 L555.0,268.5" stroke="#1ee61e" stroke-width="1"/><path d="M552.0,275.4 L555.0,272.4" stroke="#1ee61e" stroke-width="1"/><path d="M552.0,279.3 L555.0,276.3" stroke="#1ee61e" stroke-width="1"/><path d="M552.0,283.2 L555.0,280.2" stroke="#1ee61e" stroke-width="1"/><path d="M552.0,287.1 L555.0,284.1" stroke="#1ee61e" stroke-width="1"/><path d="M552.0,290.9 L555.0,287.9" stroke="#1ee61e" stroke-width="1"/><path d="M552.0,294.8 L555.0,291.8" stroke="#1ee61e" stroke-width="1"/><path d="M552.0,298.7 L555.0,295.7" stroke="#1ee61e" stroke-width="1"/><path d="M552.0,302.6 L555.0,299.6" stroke="#1ee61e" stroke-width="1"/><path d="M552.0,306.5 L555.0,303.5" stroke="#1ee61e" stroke-width="1"/><path d="M552.0,310.4 L555.0,307.4" stroke="#1ee61e" stroke-width="1"/><path d="M552.0,314.3 L555.0,311.3" stroke="#1ee61e" stroke-width="1"/><path d="M552.0,318.2 L555.0,315.2" stroke="#1ee61e" stroke-width="1"/><path d="M552.0,322.1 L555.0,319.1" stroke="#1ee61e" stroke-width="1"/><path d="M552.0,325.9 L555.0,322.9" stroke="#1ee61e" stroke-width="1"/><path d="M552.0,329.8 L555.0,326.8" stroke="#1ee61e" stroke-width="1"/><path d="M552.0,333.7 L555.0,330.7" stroke="#1ee61e" stroke-width="1"/><path d="M552.0,337.6 L555.0,334.6" stroke="#1ee61e" stroke-width="1"/><path d="M552.0,341.5 L555.0,338.5" stroke="#1ee61e" stroke-width="1"/><rect x="607.5" y="261.0" width="3" height="3" fill="#1ee61e"/><rect x="663.5" y="303.5" width="3" height="3" fill="#1ee61e"/><rect x="577.5" y="272.7" width="11.200000000000045" height="11.100000000000023" rx="0" fill="none" stroke="#ececec" stroke-width="1.2"/><rect x="590" y="272.7" width="11.200000000000045" height="11.100000000000023" rx="0" fill="none" stroke="#ececec" stroke-width="1.2"/><rect x="602.5" y="272.7" width="11.200000000000045" height="11.100000000000023" rx="0" fill="none" stroke="#ececec" stroke-width="1.2"/><rect x="615" y="272.7" width="11.200000000000045" height="11.100000000000023" rx="0" fill="none" stroke="#ececec" stroke-width="1.2"/><rect x="577.5" y="286.3" width="48.700000000000045" height="5.0" rx="0" fill="none" stroke="#ececec" stroke-width="1.1"/><rect x="629" y="272.7" width="7" height="11.100000000000023" rx="0" fill="none" stroke="#ececec" stroke-width="1.1"/><rect x="636.7" y="278.0" width="6.100000000000023" height="5.800000000000011" rx="0" fill="none" stroke="#ececec" stroke-width="1.0"/><rect x="642.8000000000001" y="278.0" width="6.100000000000023" height="5.800000000000011" rx="0" fill="none" stroke="#ececec" stroke-width="1.0"/><rect x="648.9000000000001" y="278.0" width="6.099999999999909" height="5.800000000000011" rx="0" fill="none" stroke="#ececec" stroke-width="1.0"/><rect x="577.5" y="295.5" width="11.200000000000045" height="10.800000000000011" rx="0" fill="none" stroke="#ececec" stroke-width="1.2"/><rect x="590" y="295.5" width="11.200000000000045" height="10.800000000000011" rx="0" fill="none" stroke="#ececec" stroke-width="1.2"/><rect x="602.5" y="295.5" width="11.200000000000045" height="10.800000000000011" rx="0" fill="none" stroke="#ececec" stroke-width="1.2"/><rect x="615" y="295.5" width="11.200000000000045" height="10.800000000000011" rx="0" fill="none" stroke="#ececec" stroke-width="1.2"/><rect x="577.5" y="309.3" width="48.700000000000045" height="5.0" rx="0" fill="none" stroke="#ececec" stroke-width="1.1"/><rect x="629" y="295.5" width="7" height="10.800000000000011" rx="0" fill="none" stroke="#ececec" stroke-width="1.1"/><rect x="636.7" y="300.8" width="6.100000000000023" height="5.5" rx="0" fill="none" stroke="#ececec" stroke-width="1.0"/><rect x="642.8000000000001" y="300.8" width="6.100000000000023" height="5.5" rx="0" fill="none" stroke="#ececec" stroke-width="1.0"/><rect x="648.9000000000001" y="300.8" width="6.099999999999909" height="5.5" rx="0" fill="none" stroke="#ececec" stroke-width="1.0"/><rect x="577.5" y="318" width="11.200000000000045" height="11.300000000000011" rx="0" fill="none" stroke="#ececec" stroke-width="1.2"/><rect x="590" y="318" width="11.200000000000045" height="11.300000000000011" rx="0" fill="none" stroke="#ececec" stroke-width="1.2"/><rect x="602.5" y="318" width="11.200000000000045" height="11.300000000000011" rx="0" fill="none" stroke="#ececec" stroke-width="1.2"/><rect x="615" y="318" width="11.200000000000045" height="11.300000000000011" rx="0" fill="none" stroke="#ececec" stroke-width="1.2"/><rect x="577.5" y="331.7" width="48.700000000000045" height="6.0" rx="0" fill="none" stroke="#ececec" stroke-width="1.1"/><rect x="629" y="318" width="7" height="11.300000000000011" rx="0" fill="none" stroke="#ececec" stroke-width="1.1"/><rect x="636.7" y="323.3" width="6.100000000000023" height="6.0" rx="0" fill="none" stroke="#ececec" stroke-width="1.0"/><rect x="642.8000000000001" y="323.3" width="6.100000000000023" height="6.0" rx="0" fill="none" stroke="#ececec" stroke-width="1.0"/><rect x="648.9000000000001" y="323.3" width="6.099999999999909" height="6.0" rx="0" fill="none" stroke="#ececec" stroke-width="1.0"/><rect x="563.3" y="293.8" width="11.400000000000091" height="21.69999999999999" rx="0" fill="none" stroke="#ececec" stroke-width="1.1"/><path d="M564.5,302 L569,296 L573.5,302 M566.5,315 V299.5 M571.5,315 V299.5 M569,315 V297" fill="none" stroke="#ececec" stroke-width="1"/><rect x="596" y="343.5" width="12" height="2.6" fill="#ececec"/><rect x="594" y="347" width="20" height="1.2" fill="#ececec"/><rect x="612" y="343.5" width="10" height="2.6" fill="#ececec"/><rect x="683" y="268" width="63.200000000000045" height="73.69999999999999" rx="5" fill="none" stroke="#1ee61e" stroke-width="2.2"/><rect x="684.6" y="269.6" width="60.00000000000004" height="70.49999999999999" rx="4" fill="none" stroke="#b8f0b8" stroke-width="0.9"/><path d="M683,263.5 H746.2 M748.5,268 V341.7 M680,268 V341.7" stroke="#1ee61e" stroke-width="1" fill="none"/><path d="M681.5,265.0 L684.5,262.0" stroke="#1ee61e" stroke-width="1"/><path d="M685.5,265.0 L688.5,262.0" stroke="#1ee61e" stroke-width="1"/><path d="M689.4,265.0 L692.4,262.0" stroke="#1ee61e" stroke-width="1"/><path d="M693.4,265.0 L696.4,262.0" stroke="#1ee61e" stroke-width="1"/><path d="M697.3,265.0 L700.3,262.0" stroke="#1ee61e" stroke-width="1"/><path d="M701.2,265.0 L704.2,262.0" stroke="#1ee61e" stroke-width="1"/><path d="M705.2,265.0 L708.2,262.0" stroke="#1ee61e" stroke-width="1"/><path d="M709.1,265.0 L712.1,262.0" stroke="#1ee61e" stroke-width="1"/><path d="M713.1,265.0 L716.1,262.0" stroke="#1ee61e" stroke-width="1"/><path d="M717.1,265.0 L720.1,262.0" stroke="#1ee61e" stroke-width="1"/><path d="M721.0,265.0 L724.0,262.0" stroke="#1ee61e" stroke-width="1"/><path d="M725.0,265.0 L728.0,262.0" stroke="#1ee61e" stroke-width="1"/><path d="M728.9,265.0 L731.9,262.0" stroke="#1ee61e" stroke-width="1"/><path d="M732.9,265.0 L735.9,262.0" stroke="#1ee61e" stroke-width="1"/><path d="M736.8,265.0 L739.8,262.0" stroke="#1ee61e" stroke-width="1"/><path d="M740.8,265.0 L743.8,262.0" stroke="#1ee61e" stroke-width="1"/><path d="M744.7,265.0 L747.7,262.0" stroke="#1ee61e" stroke-width="1"/><path d="M678.5,271.5 L681.5,268.5" stroke="#1ee61e" stroke-width="1"/><path d="M678.5,275.4 L681.5,272.4" stroke="#1ee61e" stroke-width="1"/><path d="M678.5,279.3 L681.5,276.3" stroke="#1ee61e" stroke-width="1"/><path d="M678.5,283.2 L681.5,280.2" stroke="#1ee61e" stroke-width="1"/><path d="M678.5,287.1 L681.5,284.1" stroke="#1ee61e" stroke-width="1"/><path d="M678.5,290.9 L681.5,287.9" stroke="#1ee61e" stroke-width="1"/><path d="M678.5,294.8 L681.5,291.8" stroke="#1ee61e" stroke-width="1"/><path d="M678.5,298.7 L681.5,295.7" stroke="#1ee61e" stroke-width="1"/><path d="M678.5,302.6 L681.5,299.6" stroke="#1ee61e" stroke-width="1"/><path d="M678.5,306.5 L681.5,303.5" stroke="#1ee61e" stroke-width="1"/><path d="M678.5,310.4 L681.5,307.4" stroke="#1ee61e" stroke-width="1"/><path d="M678.5,314.3 L681.5,311.3" stroke="#1ee61e" stroke-width="1"/><path d="M678.5,318.2 L681.5,315.2" stroke="#1ee61e" stroke-width="1"/><path d="M678.5,322.1 L681.5,319.1" stroke="#1ee61e" stroke-width="1"/><path d="M678.5,325.9 L681.5,322.9" stroke="#1ee61e" stroke-width="1"/><path d="M678.5,329.8 L681.5,326.8" stroke="#1ee61e" stroke-width="1"/><path d="M678.5,333.7 L681.5,330.7" stroke="#1ee61e" stroke-width="1"/><path d="M678.5,337.6 L681.5,334.6" stroke="#1ee61e" stroke-width="1"/><path d="M678.5,341.5 L681.5,338.5" stroke="#1ee61e" stroke-width="1"/><rect x="713.0" y="259.0" width="3" height="3" fill="#1ee61e"/><rect x="747.0" y="303.5" width="3" height="3" fill="#1ee61e"/><rect x="690" y="272.5" width="11.200000000000045" height="11.399999999999977" rx="0" fill="none" stroke="#ececec" stroke-width="1.2"/><rect x="702" y="272.5" width="11.200000000000045" height="11.399999999999977" rx="0" fill="none" stroke="#ececec" stroke-width="1.2"/><rect x="714.5" y="272.5" width="11.200000000000045" height="11.399999999999977" rx="0" fill="none" stroke="#ececec" stroke-width="1.2"/><rect x="726.8" y="272.5" width="11.200000000000045" height="11.399999999999977" rx="0" fill="none" stroke="#ececec" stroke-width="1.2"/><rect x="690" y="286.5" width="48" height="5.300000000000011" rx="0" fill="none" stroke="#ececec" stroke-width="1.1"/><rect x="690" y="295.6" width="11.200000000000045" height="11.099999999999966" rx="0" fill="none" stroke="#ececec" stroke-width="1.2"/><rect x="702" y="295.6" width="11.200000000000045" height="11.099999999999966" rx="0" fill="none" stroke="#ececec" stroke-width="1.2"/><rect x="714.5" y="295.6" width="11.200000000000045" height="11.099999999999966" rx="0" fill="none" stroke="#ececec" stroke-width="1.2"/><rect x="726.8" y="295.6" width="11.200000000000045" height="11.099999999999966" rx="0" fill="none" stroke="#ececec" stroke-width="1.2"/><rect x="690" y="309.3" width="48" height="5.199999999999989" rx="0" fill="none" stroke="#ececec" stroke-width="1.1"/><path d="M700,320.5 L694,327 H697.5 V336 H702.5 V327 H706 Z" fill="none" stroke="#ececec" stroke-width="1.1"/><rect x="714.7" y="325" width="6.099999999999909" height="11" rx="0" fill="none" stroke="#ececec" stroke-width="1.1"/><rect x="721" y="329.5" width="6.5" height="6.5" rx="0" fill="none" stroke="#ececec" stroke-width="1.0"/><rect x="727.5" y="329.5" width="6.5" height="6.5" rx="0" fill="none" stroke="#ececec" stroke-width="1.0"/><rect x="703" y="345.5" width="9" height="2.4" fill="#ececec"/><rect x="702" y="349.5" width="19" height="1.4" fill="#ececec"/><rect x="722" y="344.5" width="10" height="4" fill="#ececec"/><rect x="760.5" y="267.5" width="37" height="77" fill="none" stroke="#1ee61e" stroke-width="1.1"/><path d="M760.5,269.0 L763.5,266.0" stroke="#1ee61e" stroke-width="1"/><path d="M768.5,269.0 L771.5,266.0" stroke="#1ee61e" stroke-width="1"/><path d="M776.5,269.0 L779.5,266.0" stroke="#1ee61e" stroke-width="1"/><path d="M784.5,269.0 L787.5,266.0" stroke="#1ee61e" stroke-width="1"/><path d="M792.5,269.0 L795.5,266.0" stroke="#1ee61e" stroke-width="1"/><path d="M759.0,271.5 L762.0,268.5" stroke="#1ee61e" stroke-width="1"/><path d="M759.0,283.5 L762.0,280.5" stroke="#1ee61e" stroke-width="1"/><path d="M759.0,295.5 L762.0,292.5" stroke="#1ee61e" stroke-width="1"/><path d="M759.0,307.5 L762.0,304.5" stroke="#1ee61e" stroke-width="1"/><path d="M759.0,319.5 L762.0,316.5" stroke="#1ee61e" stroke-width="1"/><path d="M759.0,331.5 L762.0,328.5" stroke="#1ee61e" stroke-width="1"/><path d="M759.0,343.5 L762.0,340.5" stroke="#1ee61e" stroke-width="1"/><path d="M760.5,346.0 L763.5,343.0" stroke="#1ee61e" stroke-width="1"/><path d="M768.5,346.0 L771.5,343.0" stroke="#1ee61e" stroke-width="1"/><path d="M776.5,346.0 L779.5,343.0" stroke="#1ee61e" stroke-width="1"/><path d="M784.5,346.0 L787.5,343.0" stroke="#1ee61e" stroke-width="1"/><path d="M792.5,346.0 L795.5,343.0" stroke="#1ee61e" stroke-width="1"/><rect x="762" y="269" width="31.5" height="74.39999999999998" rx="0" fill="none" stroke="#00d8dc" stroke-width="1.3"/><circle cx="777.7" cy="283" r="11.6" fill="none" stroke="#f01818" stroke-width="3.2"/><text x="777.7" y="288.6" text-anchor="middle" font-size="15.5" fill="#ececec" font-family="Liberation Sans" textLength="19" lengthAdjust="spacingAndGlyphs">100</text><circle cx="777.7" cy="319.8" r="11.6" fill="none" stroke="#f01818" stroke-width="3.2"/><text x="777.7" y="325.40000000000003" text-anchor="middle" font-size="15.5" fill="#ececec" font-family="Liberation Sans" textLength="15" lengthAdjust="spacingAndGlyphs">80</text><rect x="764.2" y="297" width="27.799999999999955" height="8.399999999999977" rx="1.5" fill="none" stroke="#ececec" stroke-width="1.4"/><rect x="764.2" y="333.8" width="27.799999999999955" height="7.899999999999977" rx="1.5" fill="none" stroke="#ececec" stroke-width="1.4"/><rect x="768" y="299.5" width="2" height="3.5" fill="#ececec"/><rect x="775" y="299.5" width="2" height="3.5" fill="#ececec"/><rect x="782" y="299.5" width="2" height="3.5" fill="#ececec"/><rect x="767" y="336" width="12" height="3" fill="#ddd"/><rect x="768" y="349" width="12" height="2.6" fill="#ececec"/><rect x="768" y="353" width="21" height="1.8" fill="#1ee61e"/><path d="M556.3,351 H645.7 M556.3,431 H590 M556.3,351 V431 M645.7,351 V431 M590,431 H645.7" stroke="#1ee61e" stroke-width="1.2" fill="none"/><path d="M554.8,351.5 L557.8,348.5" stroke="#1ee61e" stroke-width="1"/><path d="M558.5,351.5 L561.5,348.5" stroke="#1ee61e" stroke-width="1"/><path d="M562.2,351.5 L565.2,348.5" stroke="#1ee61e" stroke-width="1"/><path d="M566.0,351.5 L569.0,348.5" stroke="#1ee61e" stroke-width="1"/><path d="M569.7,351.5 L572.7,348.5" stroke="#1ee61e" stroke-width="1"/><path d="M573.4,351.5 L576.4,348.5" stroke="#1ee61e" stroke-width="1"/><path d="M577.1,351.5 L580.1,348.5" stroke="#1ee61e" stroke-width="1"/><path d="M580.9,351.5 L583.9,348.5" stroke="#1ee61e" stroke-width="1"/><path d="M584.6,351.5 L587.6,348.5" stroke="#1ee61e" stroke-width="1"/><path d="M588.3,351.5 L591.3,348.5" stroke="#1ee61e" stroke-width="1"/><path d="M592.0,351.5 L595.0,348.5" stroke="#1ee61e" stroke-width="1"/><path d="M595.8,351.5 L598.8,348.5" stroke="#1ee61e" stroke-width="1"/><path d="M599.5,351.5 L602.5,348.5" stroke="#1ee61e" stroke-width="1"/><path d="M603.2,351.5 L606.2,348.5" stroke="#1ee61e" stroke-width="1"/><path d="M607.0,351.5 L610.0,348.5" stroke="#1ee61e" stroke-width="1"/><path d="M610.7,351.5 L613.7,348.5" stroke="#1ee61e" stroke-width="1"/><path d="M614.4,351.5 L617.4,348.5" stroke="#1ee61e" stroke-width="1"/><path d="M618.1,351.5 L621.1,348.5" stroke="#1ee61e" stroke-width="1"/><path d="M621.9,351.5 L624.9,348.5" stroke="#1ee61e" stroke-width="1"/><path d="M625.6,351.5 L628.6,348.5" stroke="#1ee61e" stroke-width="1"/><path d="M629.3,351.5 L632.3,348.5" stroke="#1ee61e" stroke-width="1"/><path d="M633.0,351.5 L636.0,348.5" stroke="#1ee61e" stroke-width="1"/><path d="M636.8,351.5 L639.8,348.5" stroke="#1ee61e" stroke-width="1"/><path d="M640.5,351.5 L643.5,348.5" stroke="#1ee61e" stroke-width="1"/><path d="M644.2,351.5 L647.2,348.5" stroke="#1ee61e" stroke-width="1"/><path d="M554.8,353.5 L557.8,350.5" stroke="#1ee61e" stroke-width="1"/><path d="M554.8,357.4 L557.8,354.4" stroke="#1ee61e" stroke-width="1"/><path d="M554.8,361.3 L557.8,358.3" stroke="#1ee61e" stroke-width="1"/><path d="M554.8,365.2 L557.8,362.2" stroke="#1ee61e" stroke-width="1"/><path d="M554.8,369.1 L557.8,366.1" stroke="#1ee61e" stroke-width="1"/><path d="M554.8,373.0 L557.8,370.0" stroke="#1ee61e" stroke-width="1"/><path d="M554.8,376.9 L557.8,373.9" stroke="#1ee61e" stroke-width="1"/><path d="M554.8,380.8 L557.8,377.8" stroke="#1ee61e" stroke-width="1"/><path d="M554.8,384.7 L557.8,381.7" stroke="#1ee61e" stroke-width="1"/><path d="M554.8,388.6 L557.8,385.6" stroke="#1ee61e" stroke-width="1"/><path d="M554.8,392.5 L557.8,389.5" stroke="#1ee61e" stroke-width="1"/><path d="M554.8,396.4 L557.8,393.4" stroke="#1ee61e" stroke-width="1"/><path d="M554.8,400.3 L557.8,397.3" stroke="#1ee61e" stroke-width="1"/><path d="M554.8,404.2 L557.8,401.2" stroke="#1ee61e" stroke-width="1"/><path d="M554.8,408.1 L557.8,405.1" stroke="#1ee61e" stroke-width="1"/><path d="M554.8,412.0 L557.8,409.0" stroke="#1ee61e" stroke-width="1"/><path d="M554.8,415.9 L557.8,412.9" stroke="#1ee61e" stroke-width="1"/><path d="M554.8,419.8 L557.8,416.8" stroke="#1ee61e" stroke-width="1"/><path d="M554.8,423.7 L557.8,420.7" stroke="#1ee61e" stroke-width="1"/><path d="M554.8,427.6 L557.8,424.6" stroke="#1ee61e" stroke-width="1"/><path d="M554.8,431.5 L557.8,428.5" stroke="#1ee61e" stroke-width="1"/><rect x="599.5" y="429.5" width="3" height="3" fill="#1ee61e"/><rect x="644.2" y="389.5" width="3" height="3" fill="#1ee61e"/><path d="M561,354 V412 H641 V354" fill="none" stroke="#ececec" stroke-width="1.4"/><path d="M580,356 V411" stroke="#ececec" stroke-width="1.8" stroke-dasharray="3.5 3.5"/><path d="M600.6,356 V411" stroke="#ececec" stroke-width="1.8" stroke-dasharray="3.5 3.5"/><path d="M620.4,356 V411" stroke="#ececec" stroke-width="1.8" stroke-dasharray="3.5 3.5"/><path d="M562.3,363.3 V361.3 L565.3,360.3 L567.8,357.8 H572.8 L574.8,360.3 L578.3,360.8 V363.3 Z" fill="none" stroke="#ececec" stroke-width="1.1"/><circle cx="565.8" cy="363.6" r="1.5" fill="#ececec"/><circle cx="574.8" cy="363.6" r="1.5" fill="#ececec"/><path d="M582.8,363.3 V361.3 L585.8,360.3 L588.3,357.8 H593.3 L595.3,360.3 L598.8,360.8 V363.3 Z" fill="none" stroke="#ececec" stroke-width="1.1"/><circle cx="586.3" cy="363.6" r="1.5" fill="#ececec"/><circle cx="595.3" cy="363.6" r="1.5" fill="#ececec"/><rect x="605.1999999999999" y="355.7" width="10.400000000000091" height="10.200000000000045" rx="0" fill="none" stroke="#c81ec8" stroke-width="1.6"/><text x="610.4" y="364.2" text-anchor="middle" font-size="9" fill="#ececec" font-family="Liberation Sans">?</text><rect x="625.5" y="355.7" width="10.400000000000091" height="10.200000000000045" rx="0" fill="none" stroke="#c81ec8" stroke-width="1.6"/><text x="630.7" y="364.2" text-anchor="middle" font-size="9" fill="#ececec" font-family="Liberation Sans">?</text><rect x="565.0999999999999" y="369.5" width="10.400000000000091" height="10.200000000000045" rx="0" fill="none" stroke="#c81ec8" stroke-width="1.6"/><text x="570.3" y="378.0" text-anchor="middle" font-size="9" fill="#ececec" font-family="Liberation Sans">?</text><rect x="585.5999999999999" y="369.5" width="10.400000000000091" height="10.200000000000045" rx="0" fill="none" stroke="#c81ec8" stroke-width="1.6"/><text x="590.8" y="378.0" text-anchor="middle" font-size="9" fill="#ececec" font-family="Liberation Sans">?</text><rect x="605.1999999999999" y="369.5" width="10.400000000000091" height="10.200000000000045" rx="0" fill="none" stroke="#c81ec8" stroke-width="1.6"/><text x="610.4" y="378.0" text-anchor="middle" font-size="9" fill="#ececec" font-family="Liberation Sans">?</text><rect x="625.5" y="369.5" width="10.400000000000091" height="10.200000000000045" rx="0" fill="none" stroke="#c81ec8" stroke-width="1.6"/><text x="630.7" y="378.0" text-anchor="middle" font-size="9" fill="#ececec" font-family="Liberation Sans">?</text><rect x="565.0999999999999" y="382.59999999999997" width="10.400000000000091" height="10.200000000000045" rx="0" fill="none" stroke="#c81ec8" stroke-width="1.6"/><text x="570.3" y="391.09999999999997" text-anchor="middle" font-size="9" fill="#ececec" font-family="Liberation Sans">?</text><rect x="585.5999999999999" y="382.59999999999997" width="10.400000000000091" height="10.200000000000045" rx="0" fill="none" stroke="#c81ec8" stroke-width="1.6"/><text x="590.8" y="391.09999999999997" text-anchor="middle" font-size="9" fill="#ececec" font-family="Liberation Sans">?</text><rect x="605.1999999999999" y="382.59999999999997" width="10.400000000000091" height="10.200000000000045" rx="0" fill="none" stroke="#c81ec8" stroke-width="1.6"/><text x="610.4" y="391.09999999999997" text-anchor="middle" font-size="9" fill="#ececec" font-family="Liberation Sans">?</text><rect x="625.5" y="382.59999999999997" width="10.400000000000091" height="10.200000000000045" rx="0" fill="none" stroke="#c81ec8" stroke-width="1.6"/><text x="630.7" y="391.09999999999997" text-anchor="middle" font-size="9" fill="#ececec" font-family="Liberation Sans">?</text><rect x="565.0999999999999" y="396.09999999999997" width="10.400000000000091" height="10.200000000000045" rx="0" fill="none" stroke="#c81ec8" stroke-width="1.6"/><text x="570.3" y="404.59999999999997" text-anchor="middle" font-size="9" fill="#ececec" font-family="Liberation Sans">?</text><rect x="585.5999999999999" y="396.09999999999997" width="10.400000000000091" height="10.200000000000045" rx="0" fill="none" stroke="#c81ec8" stroke-width="1.6"/><text x="590.8" y="404.59999999999997" text-anchor="middle" font-size="9" fill="#ececec" font-family="Liberation Sans">?</text><rect x="605.1999999999999" y="396.09999999999997" width="10.400000000000091" height="10.200000000000045" rx="0" fill="none" stroke="#c81ec8" stroke-width="1.6"/><text x="610.4" y="404.59999999999997" text-anchor="middle" font-size="9" fill="#ececec" font-family="Liberation Sans">?</text><rect x="625.5" y="396.09999999999997" width="10.400000000000091" height="10.200000000000045" rx="0" fill="none" stroke="#c81ec8" stroke-width="1.6"/><text x="630.7" y="404.59999999999997" text-anchor="middle" font-size="9" fill="#ececec" font-family="Liberation Sans">?</text><rect x="561" y="412.7" width="80" height="13.0" rx="3" fill="none" stroke="#9ad89a" stroke-width="2.2"/><rect x="561" y="412.7" width="80" height="13.0" rx="2.5" fill="none" stroke="#ececec" stroke-width="1.0"/><path d="M601,413 V425.5" stroke="#ececec" stroke-width="1"/><rect x="564.0" y="414.6" width="7.8" height="9.2" fill="#262b33" stroke="#c8c8c8" stroke-width="1"/><text x="567.9" y="422.3" text-anchor="middle" font-size="8.5" font-weight="bold" fill="#f0f0f0" font-family="Liberation Sans">?</text><rect x="573.4" y="414.6" width="7.8" height="9.2" fill="#262b33" stroke="#c8c8c8" stroke-width="1"/><text x="577.3" y="422.3" text-anchor="middle" font-size="8.5" font-weight="bold" fill="#f0f0f0" font-family="Liberation Sans">?</text><rect x="582.8" y="414.6" width="7.8" height="9.2" fill="#262b33" stroke="#c8c8c8" stroke-width="1"/><text x="586.6999999999999" y="422.3" text-anchor="middle" font-size="8.5" font-weight="bold" fill="#f0f0f0" font-family="Liberation Sans">?</text><rect x="592.2" y="414.6" width="7.8" height="9.2" fill="#262b33" stroke="#c8c8c8" stroke-width="1"/><text x="596.1" y="422.3" text-anchor="middle" font-size="8.5" font-weight="bold" fill="#f0f0f0" font-family="Liberation Sans">?</text><rect x="603.1" y="414.6" width="7.8" height="9.2" fill="#262b33" stroke="#c8c8c8" stroke-width="1"/><text x="607.0" y="422.3" text-anchor="middle" font-size="8.5" font-weight="bold" fill="#f0f0f0" font-family="Liberation Sans">?</text><rect x="612.5" y="414.6" width="7.8" height="9.2" fill="#262b33" stroke="#c8c8c8" stroke-width="1"/><text x="616.4" y="422.3" text-anchor="middle" font-size="8.5" font-weight="bold" fill="#f0f0f0" font-family="Liberation Sans">?</text><rect x="621.9" y="414.6" width="7.8" height="9.2" fill="#262b33" stroke="#c8c8c8" stroke-width="1"/><text x="625.8" y="422.3" text-anchor="middle" font-size="8.5" font-weight="bold" fill="#f0f0f0" font-family="Liberation Sans">?</text><rect x="631.3" y="414.6" width="7.8" height="9.2" fill="#262b33" stroke="#c8c8c8" stroke-width="1"/><text x="635.1999999999999" y="422.3" text-anchor="middle" font-size="8.5" font-weight="bold" fill="#f0f0f0" font-family="Liberation Sans">?</text><rect x="587" y="433" width="13" height="3" fill="#ececec"/><rect x="600" y="435.6" width="7" height="1" fill="#ececec"/><rect x="607" y="433" width="11" height="3" fill="#ececec"/><path d="M669,358 H770 M669,416.5 H770 M774.4,365 V413.5 M776.7,365 V413.5 M669,362 V416" stroke="#1ee61e" stroke-width="1" fill="none"/><path d="M670.5,363.5 L673.5,360.5" stroke="#1ee61e" stroke-width="1"/><path d="M674.0,363.5 L677.0,360.5" stroke="#1ee61e" stroke-width="1"/><path d="M677.5,363.5 L680.5,360.5" stroke="#1ee61e" stroke-width="1"/><path d="M681.0,363.5 L684.0,360.5" stroke="#1ee61e" stroke-width="1"/><path d="M684.5,363.5 L687.5,360.5" stroke="#1ee61e" stroke-width="1"/><path d="M688.0,363.5 L691.0,360.5" stroke="#1ee61e" stroke-width="1"/><path d="M691.5,363.5 L694.5,360.5" stroke="#1ee61e" stroke-width="1"/><path d="M695.0,363.5 L698.0,360.5" stroke="#1ee61e" stroke-width="1"/><path d="M698.5,363.5 L701.5,360.5" stroke="#1ee61e" stroke-width="1"/><path d="M702.0,363.5 L705.0,360.5" stroke="#1ee61e" stroke-width="1"/><path d="M705.5,363.5 L708.5,360.5" stroke="#1ee61e" stroke-width="1"/><path d="M709.0,363.5 L712.0,360.5" stroke="#1ee61e" stroke-width="1"/><path d="M712.5,363.5 L715.5,360.5" stroke="#1ee61e" stroke-width="1"/><path d="M716.0,363.5 L719.0,360.5" stroke="#1ee61e" stroke-width="1"/><path d="M719.5,363.5 L722.5,360.5" stroke="#1ee61e" stroke-width="1"/><path d="M723.0,363.5 L726.0,360.5" stroke="#1ee61e" stroke-width="1"/><path d="M726.5,363.5 L729.5,360.5" stroke="#1ee61e" stroke-width="1"/><path d="M730.0,363.5 L733.0,360.5" stroke="#1ee61e" stroke-width="1"/><path d="M733.5,363.5 L736.5,360.5" stroke="#1ee61e" stroke-width="1"/><path d="M737.0,363.5 L740.0,360.5" stroke="#1ee61e" stroke-width="1"/><path d="M740.5,363.5 L743.5,360.5" stroke="#1ee61e" stroke-width="1"/><path d="M744.0,363.5 L747.0,360.5" stroke="#1ee61e" stroke-width="1"/><path d="M747.5,363.5 L750.5,360.5" stroke="#1ee61e" stroke-width="1"/><path d="M751.0,363.5 L754.0,360.5" stroke="#1ee61e" stroke-width="1"/><path d="M754.5,363.5 L757.5,360.5" stroke="#1ee61e" stroke-width="1"/><path d="M758.0,363.5 L761.0,360.5" stroke="#1ee61e" stroke-width="1"/><path d="M761.5,363.5 L764.5,360.5" stroke="#1ee61e" stroke-width="1"/><path d="M765.0,363.5 L768.0,360.5" stroke="#1ee61e" stroke-width="1"/><path d="M768.5,363.5 L771.5,360.5" stroke="#1ee61e" stroke-width="1"/><path d="M670.5,418.0 L673.5,415.0" stroke="#1ee61e" stroke-width="1"/><path d="M686.8,418.0 L689.8,415.0" stroke="#1ee61e" stroke-width="1"/><path d="M703.2,418.0 L706.2,415.0" stroke="#1ee61e" stroke-width="1"/><path d="M719.5,418.0 L722.5,415.0" stroke="#1ee61e" stroke-width="1"/><path d="M735.8,418.0 L738.8,415.0" stroke="#1ee61e" stroke-width="1"/><path d="M752.2,418.0 L755.2,415.0" stroke="#1ee61e" stroke-width="1"/><path d="M768.5,418.0 L771.5,415.0" stroke="#1ee61e" stroke-width="1"/><path d="M667.5,366.5 L670.5,363.5" stroke="#1ee61e" stroke-width="1"/><path d="M667.5,371.3 L670.5,368.3" stroke="#1ee61e" stroke-width="1"/><path d="M667.5,376.1 L670.5,373.1" stroke="#1ee61e" stroke-width="1"/><path d="M667.5,380.9 L670.5,377.9" stroke="#1ee61e" stroke-width="1"/><path d="M667.5,385.7 L670.5,382.7" stroke="#1ee61e" stroke-width="1"/><path d="M667.5,390.5 L670.5,387.5" stroke="#1ee61e" stroke-width="1"/><path d="M667.5,395.3 L670.5,392.3" stroke="#1ee61e" stroke-width="1"/><path d="M667.5,400.1 L670.5,397.1" stroke="#1ee61e" stroke-width="1"/><path d="M667.5,404.9 L670.5,401.9" stroke="#1ee61e" stroke-width="1"/><path d="M667.5,409.7 L670.5,406.7" stroke="#1ee61e" stroke-width="1"/><path d="M667.5,414.5 L670.5,411.5" stroke="#1ee61e" stroke-width="1"/><path d="M772.9,366.5 L775.9,363.5" stroke="#1ee61e" stroke-width="1"/><path d="M772.9,378.6 L775.9,375.6" stroke="#1ee61e" stroke-width="1"/><path d="M772.9,390.8 L775.9,387.8" stroke="#1ee61e" stroke-width="1"/><path d="M772.9,402.9 L775.9,399.9" stroke="#1ee61e" stroke-width="1"/><path d="M772.9,415.0 L775.9,412.0" stroke="#1ee61e" stroke-width="1"/><rect x="673" y="366.3" width="98" height="48.7" rx="3" fill="none" stroke="#2424e6" stroke-width="1.3"/><rect x="671.7" y="365.2" width="97.5" height="47.5" rx="3" fill="none" stroke="#ececec" stroke-width="1.3"/><rect x="674" y="366.5" width="6" height="6" fill="#2424e6"/><rect x="673" y="365.5" width="8" height="8.5" rx="0" fill="none" stroke="#ececec" stroke-width="0.8"/><rect x="707.7" y="367.7" width="9.0" height="8.300000000000011" rx="0" fill="none" stroke="#ececec" stroke-width="1.1"/><rect x="716.7" y="367.7" width="8.799999999999955" height="8.300000000000011" rx="0" fill="none" stroke="#ececec" stroke-width="1.1"/><rect x="725.5" y="367.7" width="8.5" height="8.300000000000011" rx="0" fill="none" stroke="#ececec" stroke-width="1.1"/><rect x="707.7" y="378" width="26.299999999999955" height="4" rx="0" fill="none" stroke="#ececec" stroke-width="1.1"/><rect x="735" y="372" width="22" height="5" rx="0" fill="none" stroke="#ececec" stroke-width="1.1"/><path d="M742,372 V377 M749,372 V377" stroke="#ececec" stroke-width="0.9"/><rect x="675.5" y="386.5" width="8.700000000000045" height="9.300000000000011" rx="0" fill="none" stroke="#ececec" stroke-width="1.1"/><rect x="684.2" y="386.5" width="8.799999999999955" height="9.300000000000011" rx="0" fill="none" stroke="#ececec" stroke-width="1.1"/><rect x="693.0" y="386.5" width="8.700000000000045" height="9.300000000000011" rx="0" fill="none" stroke="#ececec" stroke-width="1.1"/><rect x="675.5" y="397" width="26.200000000000045" height="4" rx="0" fill="none" stroke="#ececec" stroke-width="1.1"/><rect x="677.0" y="402" width="23.0" height="6" rx="0" fill="none" stroke="#ececec" stroke-width="1.1"/><path d="M682.5,402 V408 M688.5,402 V408 M694.5,402 V408" stroke="#ececec" stroke-width="0.9"/><rect x="740" y="386.5" width="8.700000000000045" height="9.300000000000011" rx="0" fill="none" stroke="#ececec" stroke-width="1.1"/><rect x="748.7" y="386.5" width="8.799999999999955" height="9.300000000000011" rx="0" fill="none" stroke="#ececec" stroke-width="1.1"/><rect x="757.5" y="386.5" width="8.700000000000045" height="9.300000000000011" rx="0" fill="none" stroke="#ececec" stroke-width="1.1"/><rect x="740" y="397" width="26.200000000000045" height="4" rx="0" fill="none" stroke="#ececec" stroke-width="1.1"/><rect x="741.5" y="402" width="23.0" height="6" rx="0" fill="none" stroke="#ececec" stroke-width="1.1"/><path d="M747,402 V408 M753,402 V408 M759,402 V408" stroke="#ececec" stroke-width="0.9"/><path d="M704,396 L709,392.5 V393 H732 V392.5 L737,396 L732,399.5 V399 H709 V399.5 Z" fill="none" stroke="#ececec" stroke-width="1.1"/><path d="M713,393 V399 M718,393 V399 M723,393 V399 M728,393 V399" stroke="#ececec" stroke-width="0.8"/><path d="M719,392.5 V389 H716.5 L720.7,383.5 L725,389 H722.5 V392.5 M720.7,399.5 V405" fill="none" stroke="#ececec" stroke-width="1.1"/><rect x="713" y="406" width="16" height="5" rx="0" fill="none" stroke="#ececec" stroke-width="1.1"/><path d="M718,406 V411 M723.5,406 V411" stroke="#ececec" stroke-width="0.9"/><rect x="719" y="423.5" width="9" height="2.4" fill="#ececec"/><rect x="719" y="428" width="13" height="1.6" fill="#1ee61e"/><rect x="732" y="423" width="10" height="3.5" fill="#ececec"/><rect x="759" y="422" width="7" height="8" fill="#ececec"/><rect x="766" y="425" width="16" height="4.6" fill="#ececec"/><rect x="782" y="427" width="8" height="2.2" fill="#ececec"/><g stroke="#f0f0f0" stroke-width="1.3" fill="none"><path d="M210,164.5 L241.5,164.5 M247.5,164.5 L279,164.5 M244.5,130 L244.5,161.5 M244.5,167.5 L244.5,199"/><rect x="242" y="161.5" width="5" height="6.2"/></g><g stroke="#e8e8e8" stroke-width="1.3" fill="none"><path d="M53.5,537 L53.5,600"/><rect x="48" y="593" width="12" height="10"/><path d="M55,518 L62.5,525.5 L70,518 M62.5,525.5 L62.5,533"/><path d="M120,583 L135,598 M135,583 L120,598"/></g></g></svg>
<div class="t" style="left:14px;top:17px;font-size:15px;color:#cdc6c2">分册目录、扉页(第一册)*</div>
<div class="t" style="left:231px;top:17.5px;font-size:15px;color:#f6f6f6;letter-spacing:0.2px">S-T-08 交通标志版面大样图*</div>
<div class="t" style="left:40px;top:50px;font-size:16px;color:#e0e0e0">[&#8202;−&#8202;][俯视][二维线框]</div>
<svg class="abs" style="left:0;top:0" width="800" height="600" viewBox="0 0 800 600"><defs><linearGradient id="gcmd" x1="0" y1="0" x2="0" y2="1"><stop offset="0" stop-color="#6a6a6a"/><stop offset="1" stop-color="#5a5a5a"/></linearGradient></defs><path d="M250,597 V586 Q250,582.5 253.5,582.5 H318 V597 Z" fill="url(#gcmd)"/><rect x="318" y="582.5" width="478" height="14.5" fill="#c0c1c3"/><g fill="#9a9a9a"><rect x="255.5" y="588" width="1.6" height="1.6"/><rect x="258.5" y="588" width="1.6" height="1.6"/><rect x="255.5" y="591.5" width="1.6" height="1.6"/><rect x="258.5" y="591.5" width="1.6" height="1.6"/><rect x="255.5" y="595" width="1.6" height="1.6"/><rect x="258.5" y="595" width="1.6" height="1.6"/></g><path d="M271,592 L279,600 M279,592 L271,600" stroke="#e0e0e0" stroke-width="1.8"/><path d="M297,597 C297,592 300,590 303,591 L301,593.5 L303,595.5 L305.5,593 C306.5,596 304,599 300,598" fill="none" stroke="#e0e0e0" stroke-width="1.8"/><path d="M324,593 Q324,590 327,590 H339 Q342,590 342,593 V597 H324 Z" fill="#9c9c9c" stroke="#8a8a8a" stroke-width="0.6"/></svg>
<div class="t" style="left:367px;top:587px;font-size:14.5px;color:#7c7c7c;font-style:italic">键入命令</div>
<div class="abs" style="left:0;top:597px;width:800px;height:3px;background:#f9e300"></div>
<div class="abs" style="left:5px;top:151px;width:7px;height:22px;overflow:hidden"><div class="t" style="left:-1px;top:0;font-size:15px;color:#f0f0f0">合</div></div>
<div class="t" style="left:5px;top:0px;font-size:15.5px;line-height:18px;color:#979b9f;font-family:'Liberation Serif',serif;letter-spacing:3.3px;transform:scale(1,1.3);transform-origin:0 0">中国道桥网</div>
<div class="t" style="left:655px;top:568px;font-size:17px;line-height:20px;color:#8a8e92;font-family:'Liberation Mono',monospace;letter-spacing:-0.2px;transform:scale(1,1.6);transform-origin:0 0">www.cndao.com</div>
</body></html>
